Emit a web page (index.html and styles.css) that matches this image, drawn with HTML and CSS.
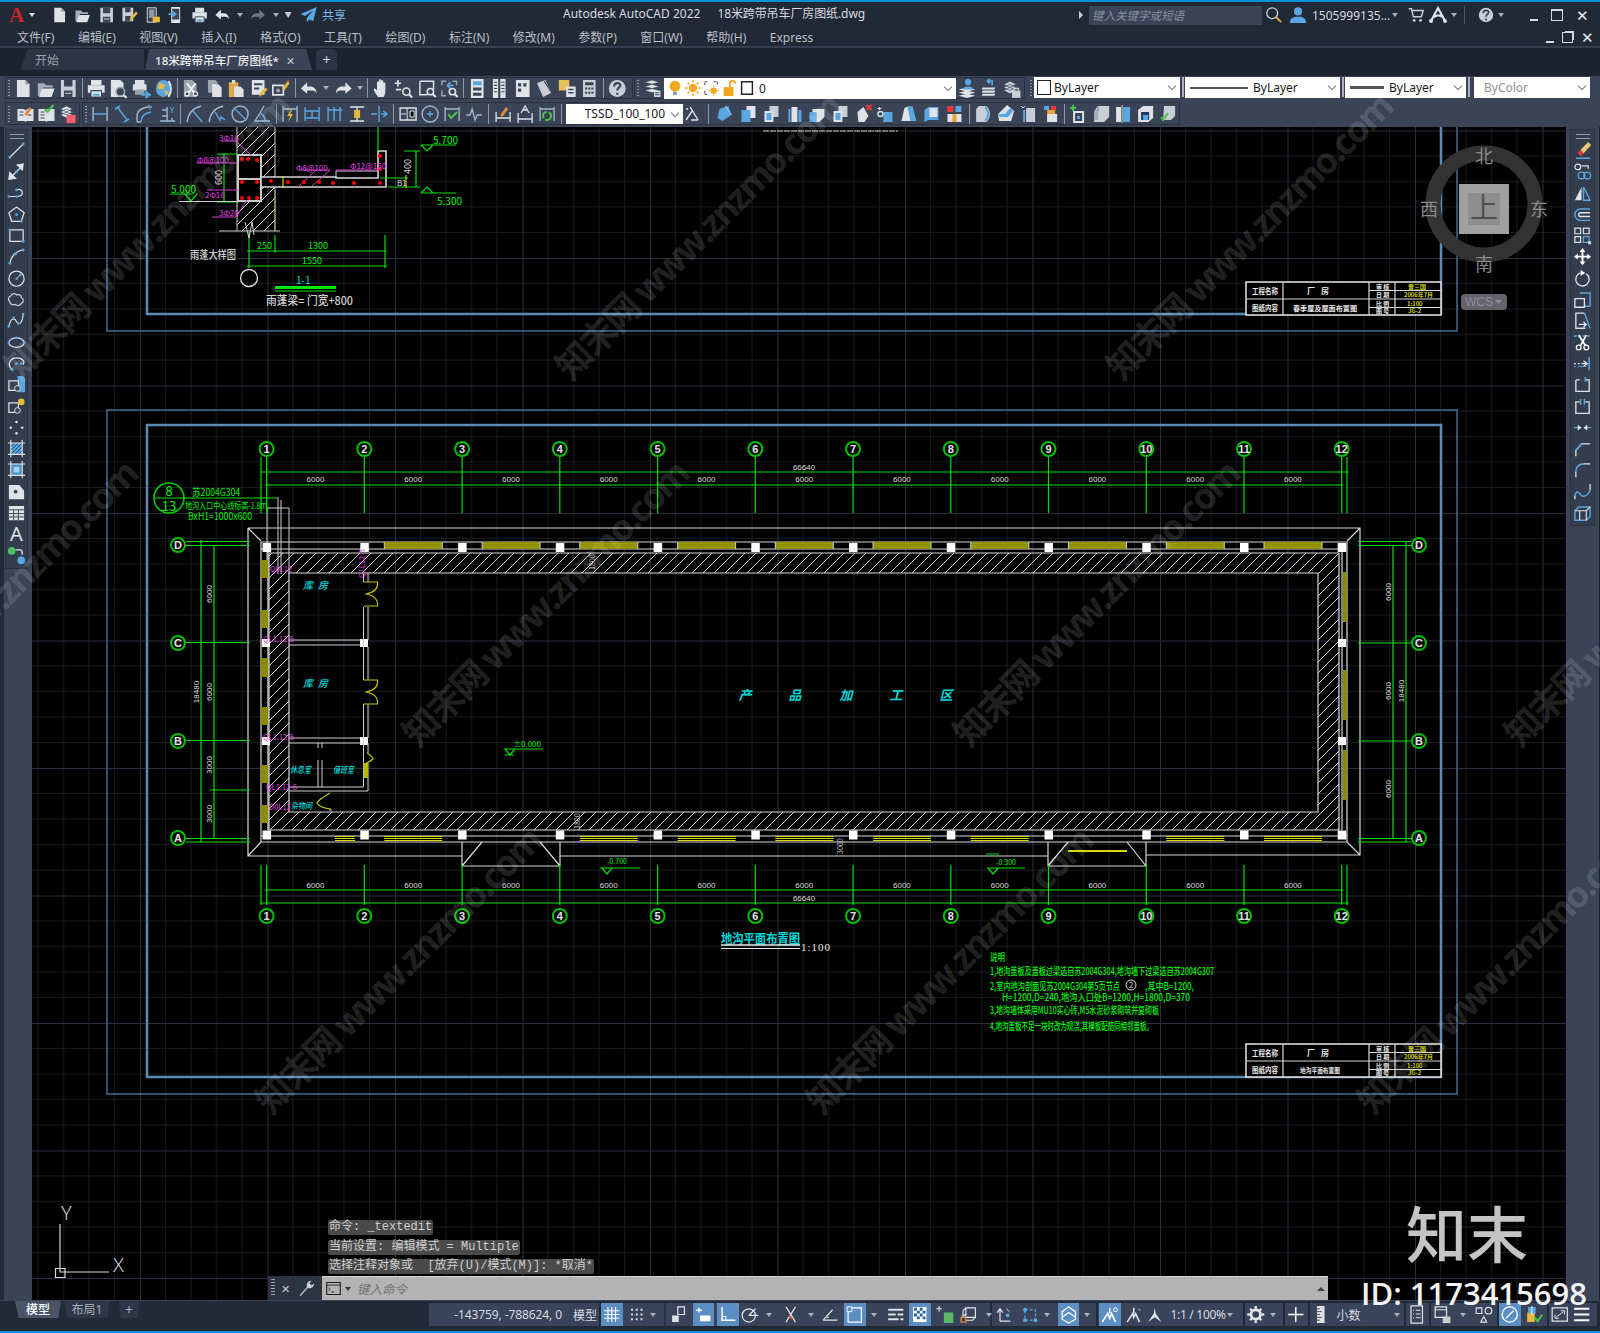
FILE: index.html
```html
<!DOCTYPE html>
<html lang="zh">
<head>
<meta charset="utf-8">
<title>Autodesk AutoCAD 2022</title>
<link rel="stylesheet" href="styles.css">
</head>
<body>
<svg class="sprite" xmlns="http://www.w3.org/2000/svg">
<symbol id="new" viewBox="0 0 20 20"><path d="M4 2h8l4 4v12H4z" fill="#dfe3e8"/><path d="M12 2v4h4z" fill="#8f98a5"/></symbol>
<symbol id="open" viewBox="0 0 20 20"><path d="M2 5h6l2 2h6v2H7l-3 8H2z" fill="#a6adb8"/><path d="M6 10h12l-3 8H3z" fill="#dfe3e8"/></symbol>
<symbol id="save" viewBox="0 0 20 20"><path d="M3 2h14v16H3z" fill="#c9ced6"/><path d="M6 2h8v6H6zM6 12h8v6H6z" fill="#3a4456"/><path d="M7 14h6v1H7z" fill="#c9ced6"/></symbol>
<symbol id="saveas" viewBox="0 0 20 20"><path d="M2 2h12v15H2z" fill="#c9ced6"/><path d="M5 2h6v5H5zM5 11h6v6H5z" fill="#3a4456"/><path d="M10 17l1-4 6-7 2 2-6 7z" fill="#e8b93a"/></symbol>
<symbol id="phone" viewBox="0 0 20 20"><path d="M4 2h10v16H4z" fill="#39404c" stroke="#dfe3e8"/><path d="M6 4h6v9H6z" fill="#8f98a5"/><path d="M10 12h8v6h-8z" fill="#e8b93a"/></symbol>
<symbol id="phone2" viewBox="0 0 20 20"><path d="M5 1h10v18H5z" fill="#dfe3e8"/><path d="M6 3h8v12H6z" fill="#3a4456"/><path d="M2 9h7M6 6l4 3-4 3" stroke="#5aa6e0" stroke-width="2" fill="none"/></symbol>
<symbol id="print" viewBox="0 0 20 20"><path d="M5 2h10v5H5z" fill="#dfe3e8"/><path d="M2 7h16v7H2z" fill="#dfe3e8"/><path d="M5 12h10v6H5z" fill="#dfe3e8" stroke="#3a4456"/><path d="M7 15h6v2H7z" fill="#5aa6e0"/></symbol>
<symbol id="preview" viewBox="0 0 20 20"><path d="M3 2h9l3 3v13H3z" fill="#dfe3e8"/><circle cx="12" cy="13" r="4" fill="#3a4456" stroke="#9aa3ae" stroke-width="1.5"/><path d="M15 16l3 3" stroke="#dfe3e8" stroke-width="2"/></symbol>
<symbol id="publish" viewBox="0 0 20 20"><path d="M4 2h9v4H4zM2 6h13v6H2z" fill="#dfe3e8"/><path d="M4 11h9v5H4z" fill="#9aa3ae"/><path d="M10 16h7M14 13l4 3-4 3" stroke="#5aa6e0" stroke-width="2" fill="none"/></symbol>
<symbol id="globe" viewBox="0 0 20 20"><ellipse cx="10" cy="10" rx="7" ry="8" fill="#5aa6e0"/><path d="M6 4l6 3-2 4-5-1zM11 12l4 1-2 4z" fill="#e8b93a"/><path d="M15 3c3 4 3 10 0 15" stroke="#dfe3e8" stroke-width="2" fill="none"/></symbol>
<symbol id="cut" viewBox="0 0 20 20"><path d="M3 2h8l4 4v12H3z" fill="#9aa3ae"/><path d="M6 5l8 11M14 5L6 16" stroke="#fff" stroke-width="1.6"/><circle cx="6" cy="15" r="2" fill="#3a4456" stroke="#fff"/><circle cx="14" cy="15" r="2" fill="#3a4456" stroke="#fff"/></symbol>
<symbol id="copy" viewBox="0 0 20 20"><path d="M4 2h7l2 2v10H4z" fill="#9aa3ae"/><path d="M8 6h6l3 3v9H8z" fill="#dfe3e8"/></symbol>
<symbol id="paste" viewBox="0 0 20 20"><path d="M3 4h9v14H3z" fill="#e0a94a"/><path d="M6 2h3v3H6z" fill="#dfe3e8"/><path d="M8 8h6l3 3v7H8z" fill="#dfe3e8"/></symbol>
<symbol id="match" viewBox="0 0 20 20"><path d="M3 2h12v14H3z" fill="#dfe3e8"/><path d="M5 5h8v2H5zM5 9h5v2H5z" fill="#3a4456"/><path d="M10 18l1-4 5-5 2 2-5 5z" fill="#e8b93a"/></symbol>
<symbol id="brush" viewBox="0 0 20 20"><path d="M2 7h10v9H2z" fill="none" stroke="#dfe3e8" stroke-width="1.6"/><circle cx="7" cy="12" r="2" fill="#9aa3ae"/><path d="M11 10l5-7 2 2-5 7z" fill="#e8b93a"/><path d="M15 3l2-1 1 2z" fill="#e24b3e"/></symbol>
<symbol id="undo" viewBox="0 0 20 20"><path d="M8 4L2 10l6 5v-3h5c2 0 3 1 4 3 0-5-3-7-6-7H8z" fill="#dfe3e8"/></symbol>
<symbol id="redo" viewBox="0 0 20 20"><path d="M12 4l6 6-6 5v-3H7c-2 0-3 1-4 3 0-5 3-7 6-7h3z" fill="#dfe3e8"/></symbol>
<symbol id="redodim" viewBox="0 0 20 20"><path d="M12 4l6 6-6 5v-3H7c-2 0-3 1-4 3 0-5 3-7 6-7h3z" fill="#6f7785"/></symbol>
<symbol id="hand" viewBox="0 0 20 20"><path d="M6 18c-2-3-4-5-4-7s2-1 3 1V4c0-1 2-1 2 0v5V2c0-1 2-1 2 0v7V3c0-1 2-1 2 0v6V5c0-1 2-1 2 0v8c0 2-1 4-2 5z" fill="#dfe3e8"/></symbol>
<symbol id="zrt" viewBox="0 0 20 20"><path d="M4 2v6M1 5h6M2 11h5" stroke="#dfe3e8" stroke-width="1.6"/><circle cx="12" cy="13" r="3.4" fill="none" stroke="#dfe3e8" stroke-width="1.5"/><path d="M14.5 15.5l3 3" stroke="#dfe3e8" stroke-width="2"/></symbol>
<symbol id="zwin" viewBox="0 0 20 20"><path d="M3 3h13v8M3 3v13h7" fill="none" stroke="#dfe3e8" stroke-width="1.4"/><circle cx="13" cy="13" r="3" fill="none" stroke="#dfe3e8" stroke-width="1.5"/><path d="M15 15l3 3" stroke="#dfe3e8" stroke-width="2"/></symbol>
<symbol id="zprev" viewBox="0 0 20 20"><path d="M3 7V3h4M17 7V3h-4M3 12v5h4" fill="none" stroke="#9aa3ae" stroke-width="1.4"/><path d="M8 7H14M8 7l3-3M8 7l3 3" stroke="#5aa6e0" stroke-width="1.6" fill="none"/><circle cx="13" cy="13" r="3" fill="none" stroke="#dfe3e8" stroke-width="1.5"/><path d="M15 15l3 3" stroke="#dfe3e8" stroke-width="2"/></symbol>
<symbol id="props" viewBox="0 0 20 20"><path d="M4 1h12v18H4z" fill="#dfe3e8"/><path d="M6 3h8v4H6z" fill="#5aa6e0"/><path d="M6 9h8v3H6zM6 14h8v3H6z" fill="#3a4456"/></symbol>
<symbol id="dc" viewBox="0 0 20 20"><path d="M4 1h5v18H4zM11 1h5v18h-5z" fill="#dfe3e8"/><path d="M5 4h3M5 7h3M5 10h3M5 13h3M12 4h3M12 7h3M12 10h3M12 13h3" stroke="#3a4456"/></symbol>
<symbol id="tpal" viewBox="0 0 20 20"><path d="M4 2h13v16H4z" fill="#dfe3e8"/><path d="M6 5h3v3H6zM11 5h3v3h-3zM6 10h3v3H6z" fill="#3a4456"/></symbol>
<symbol id="sheet" viewBox="0 0 20 20"><path d="M3 5l8-3 6 12-8 4z" fill="#c9ced6"/><path d="M10 3l7 11" stroke="#3a4456"/></symbol>
<symbol id="markup" viewBox="0 0 20 20"><path d="M2 2h10v10H2z" fill="#e8c15a"/><path d="M9 8h9v10H9z" fill="#dfe3e8"/><path d="M11 11h5M11 14h5" stroke="#3a4456" stroke-width="1.4"/></symbol>
<symbol id="calc" viewBox="0 0 20 20"><path d="M4 2h12v16H4z" fill="#c9ced6"/><path d="M6 4h8v3H6z" fill="#3a4456"/><path d="M6 9h2v2H6zM9 9h2v2H9zM12 9h2v2h-2zM6 13h2v2H6zM9 13h2v2H9zM12 13h2v2h-2z" fill="#3a4456"/></symbol>
<symbol id="help" viewBox="0 0 20 20"><circle cx="10" cy="10" r="8" fill="#c9ced6"/><path d="M7 8c0-4 6-4 6-1 0 2-3 2-3 5M10 14v2" stroke="#3a4456" stroke-width="2" fill="none"/></symbol>
<symbol id="layer" viewBox="0 0 20 20"><path d="M3 4l7-2 7 2-7 2zM3 8l7-2 7 2-7 2zM3 12l7-2 7 2-7 2z" fill="#dfe3e8" stroke="#3a4456" stroke-width=".6"/><path d="M12 12h6v6h-6z" fill="#dfe3e8"/><path d="M13 14h4M13 16h4" stroke="#3a4456"/></symbol>
<symbol id="lay1" viewBox="0 0 20 20"><path d="M2 11l8-2 8 2-8 2zM2 14l8-2 8 2-8 2zM2 17l8-2 8 2-8 2z" fill="#dfe3e8"/><circle cx="11" cy="4" r="3" fill="#5aa6e0"/><path d="M6 11c0-4 10-4 10 0z" fill="#5aa6e0"/></symbol>
<symbol id="lay2" viewBox="0 0 20 20"><path d="M4 9h12l-1 2H3zM4 12h12l-1 2H3zM4 15h12l-1 2H3z" fill="#dfe3e8"/><path d="M13 7V3H8M8 3l3-2M8 3l3 2" stroke="#5aa6e0" stroke-width="1.6" fill="none"/></symbol>
<symbol id="lay3" viewBox="0 0 20 20"><path d="M3 6l6-3 6 3-6 3zM3 9l6-3 6 3-6 3zM3 12l6-3 6 3-6 3z" fill="#c9ced6" stroke="#3a4456" stroke-width=".6"/><path d="M11 12h8v7h-8z" fill="#c9ced6"/><path d="M13 12V10h4v2" stroke="#c9ced6" fill="none" stroke-width="1.4"/></symbol>
<symbol id="bulb" viewBox="0 0 20 20"><circle cx="10" cy="8" r="6" fill="#f2a71e"/><path d="M8 14h4v4H8z" fill="#8f98a5"/></symbol>
<symbol id="sun" viewBox="0 0 20 20"><circle cx="10" cy="10" r="4.5" fill="#f2a71e"/><path d="M10 1v3M10 16v3M1 10h3M16 10h3M4 4l2 2M14 14l2 2M4 16l2-2M14 6l2-2" stroke="#f2a71e" stroke-width="1.6"/></symbol>
<symbol id="frz" viewBox="0 0 20 20"><path d="M3 7V3h4M13 3h4v4M3 13v4h4" fill="none" stroke="#6c7480" stroke-width="1.4" stroke-dasharray="3 1"/><circle cx="13" cy="13" r="3.5" fill="#f2a71e"/><path d="M13 7v2M13 17v2M7 13h2M17 13h2" stroke="#f2a71e"/></symbol>
<symbol id="lock" viewBox="0 0 20 20"><path d="M4 9h11v10H4z" fill="#f2a71e"/><path d="M11 9V5c0-4 6-4 6 0" fill="none" stroke="#f2a71e" stroke-width="2"/></symbol>
<symbol id="sq" viewBox="0 0 20 20"><path d="M4 3h12v14H4z" fill="#fff" stroke="#222" stroke-width="1.6"/></symbol>
<symbol id="note" viewBox="0 0 20 20"><path d="M2 5h6c1 0 2 1 2 2 0-1 1-2 2-2h6v12h-7l-1 1-1-1H2z" fill="#dfe3e8"/><path d="M4 8h4M4 11h4M12 11h4" stroke="#3a4456"/><path d="M9 10l5-7 2 2-5 7z" fill="#e8863a"/></symbol>
<symbol id="ncheck" viewBox="0 0 20 20"><path d="M2 5h7l1 1 1-1h7v12h-7l-1 1-1-1H2z" fill="#dfe3e8"/><path d="M4 8h4M4 11h4M4 14h4" stroke="#3a4456"/><path d="M8 5l3 3 6-7" stroke="#4ec24e" stroke-width="2" fill="none"/></symbol>
<symbol id="npink" viewBox="0 0 20 20"><path d="M3 5l6-3 6 3-6 3zM3 8l6-3 6 3-6 3zM3 11l6-3 6 3-6 3z" fill="#dfe3e8" stroke="#3a4456" stroke-width=".6"/><path d="M9 11h9v8H9z" fill="#f0606a"/></symbol>
<symbol id="dlin" viewBox="0 0 20 20"><path d="M3 3v14M17 3v14" stroke="#9db6cf" stroke-width="1.5"/><path d="M3 10h14" stroke="#5aa6e0" stroke-width="1.5"/></symbol>
<symbol id="dali" viewBox="0 0 20 20"><path d="M3 5l5-3M12 18l5-3M6 4l9 12" stroke="#5aa6e0" stroke-width="1.5" fill="none"/></symbol>
<symbol id="darc" viewBox="0 0 20 20"><path d="M3 18V12C3 6 9 3 16 3M3 18h4" stroke="#9db6cf" stroke-width="1.5" fill="none"/><path d="M7 18c0-6 4-9 10-10" stroke="#5aa6e0" stroke-width="1.5" fill="none"/><path d="M14 1l4 2-3 3" fill="none" stroke="#5aa6e0"/></symbol>
<symbol id="dord" viewBox="0 0 20 20"><path d="M3 17h15M10 3v14M5 6h5M5 12h5M15 14v3" stroke="#9db6cf" stroke-width="1.4"/><path d="M13 3l2 3 2-3M15 6v3" stroke="#5aa6e0" fill="none"/></symbol>
<symbol id="drad" viewBox="0 0 20 20"><path d="M2 18C3 10 8 4 16 2" stroke="#9db6cf" stroke-width="1.4" fill="none"/><path d="M17 18L8 7" stroke="#5aa6e0" stroke-width="1.4"/></symbol>
<symbol id="djog" viewBox="0 0 20 20"><path d="M2 18C3 10 8 4 16 2" stroke="#9db6cf" stroke-width="1.4" fill="none"/><path d="M18 16l-4-3-1 3-5-8" stroke="#5aa6e0" stroke-width="1.4" fill="none"/></symbol>
<symbol id="ddia" viewBox="0 0 20 20"><circle cx="10" cy="10" r="8" stroke="#9db6cf" stroke-width="1.4" fill="none"/><path d="M4 4l12 12" stroke="#5aa6e0" stroke-width="1.4"/></symbol>
<symbol id="dang" viewBox="0 0 20 20"><path d="M2 17h16M3 17L12 2" stroke="#9db6cf" stroke-width="1.4"/><path d="M13 17c0-4-2-6-4-8" stroke="#5aa6e0" stroke-width="1.4" fill="none"/></symbol>
<symbol id="dqk" viewBox="0 0 20 20"><path d="M3 2v16M17 2v16M3 5h14" stroke="#9db6cf" stroke-width="1.4"/><path d="M11 6l-4 6h3l-2 6 5-8h-3l2-4z" fill="#e8b93a"/></symbol>
<symbol id="dbase" viewBox="0 0 20 20"><path d="M3 3v14M17 3v14M3 7h14M3 14h14M10 7v7" stroke="#5aa6e0" stroke-width="1.4"/></symbol>
<symbol id="dcont" viewBox="0 0 20 20"><path d="M3 3v14M9 3v14M15 3v14M3 6h14" stroke="#5aa6e0" stroke-width="1.4"/></symbol>
<symbol id="dspc" viewBox="0 0 20 20"><path d="M3 3h14M3 17h14M10 3v14" stroke="#dfe3e8" stroke-width="1.4"/><path d="M7 6h6v8H7z" fill="#e8b93a"/></symbol>
<symbol id="dbrk" viewBox="0 0 20 20"><path d="M10 2v16M2 10h6M12 10h6M14 7l4 3-4 3" stroke="#5aa6e0" stroke-width="1.4" fill="none"/></symbol>
<symbol id="tol" viewBox="0 0 20 20"><path d="M2 4h16v12H2z" fill="none" stroke="#dfe3e8" stroke-width="1.4"/><path d="M9 4v12M3 10h5M12 7h4v6h-4z" stroke="#dfe3e8"/></symbol>
<symbol id="cen" viewBox="0 0 20 20"><circle cx="10" cy="10" r="8" fill="none" stroke="#9db6cf" stroke-width="1.4"/><path d="M10 7v6M7 10h6" stroke="#5aa6e0" stroke-width="1.4"/></symbol>
<symbol id="insp" viewBox="0 0 20 20"><path d="M3 3v14M17 3v14M3 5h14" stroke="#9db6cf" stroke-width="1.4"/><path d="M6 10l3 4 6-6" stroke="#4ec24e" stroke-width="2" fill="none"/></symbol>
<symbol id="jogl" viewBox="0 0 20 20"><path d="M2 11h4l2-6 3 11 2-5h5" stroke="#9db6cf" stroke-width="1.4" fill="none"/></symbol>
<symbol id="dedit" viewBox="0 0 20 20"><path d="M3 8v10M17 8v10M3 14h14" stroke="#dfe3e8" stroke-width="1.3"/><path d="M7 11l6-8 2 2-6 8z" fill="#e8863a"/></symbol>
<symbol id="dtxt" viewBox="0 0 20 20"><path d="M3 9v10M17 9v10M3 15h14M6 9l4-7 4 7M7.500 6h5" stroke="#dfe3e8" stroke-width="1.3" fill="none"/></symbol>
<symbol id="dupd" viewBox="0 0 20 20"><path d="M3 3v14M17 3v14M3 5h14" stroke="#9db6cf" stroke-width="1.3"/><circle cx="10" cy="12" r="4" fill="none" stroke="#4ec24e" stroke-width="2" stroke-dasharray="8 2"/></symbol>
<symbol id="ann" viewBox="0 0 20 20"><path d="M2 16l6-9M2 5h2M6 3l8 13M7 16h7" stroke="#dfe3e8" stroke-width="1.4"/></symbol>
<symbol id="s3a" viewBox="0 0 20 20"><path d="M4 5l9-3 3 9-9 6-5-3z" fill="#5aa6e0"/><path d="M10 2l6 9" stroke="#9fd0f2"/></symbol>
<symbol id="s3b" viewBox="0 0 20 20"><path d="M8 2h9v12H8z" fill="#dfe3e8"/><path d="M3 6h9v12H3z" fill="#5aa6e0"/></symbol>
<symbol id="s3c" viewBox="0 0 20 20"><path d="M8 2h9v11H8z" fill="#c9ced6"/><path d="M3 7h9v11H3z" fill="#dfe3e8"/><path d="M5 9h5v7H5z" fill="#5aa6e0"/></symbol>
<symbol id="s3d" viewBox="0 0 20 20"><path d="M4 5h2v13H4zM14 6h3v12h-3z" fill="#5aa6e0"/><path d="M7 3h6v15H7z" fill="#dfe3e8"/></symbol>
<symbol id="s3e" viewBox="0 0 20 20"><path d="M2 8h7v10H2z" fill="#5aa6e0"/><path d="M5 5h12v8l-5 5H9V8H5z" fill="#dfe3e8"/></symbol>
<symbol id="s3f" viewBox="0 0 20 20"><path d="M4 8l6-5 5 9-4 6H5z" fill="#dfe3e8"/><path d="M13 1l5 5M18 1l-5 5" stroke="#f0383a" stroke-width="2"/></symbol>
<symbol id="s3g" viewBox="0 0 20 20"><path d="M8 8h9v10H8z" fill="#5aa6e0"/><path d="M4 3v3M2 4.500h4" stroke="#dfe3e8"/><circle cx="5" cy="10" r="2.500" fill="none" stroke="#dfe3e8" stroke-width="1.4"/></symbol>
<symbol id="s3h" viewBox="0 0 20 20"><path d="M3 17l3-13 5-2 2 15z" fill="#dfe3e8"/><path d="M9 3l5-1 4 15h-6z" fill="#5aa6e0"/></symbol>
<symbol id="s3i" viewBox="0 0 20 20"><path d="M3 6l4-3v13l-4 2zM7 3h10v13H7z" fill="#5aa6e0"/><path d="M8 4h8v9H8z" fill="#dfe3e8"/></symbol>
<symbol id="s3j" viewBox="0 0 20 20"><path d="M3 2h6v6H3z" fill="#f0383a"/><path d="M11 2h6v6h-6z" fill="#5aa6e0"/><path d="M3 10h14v8H3z" fill="#dfe3e8"/><path d="M8 10h4v8H8z" fill="#e8a33a"/></symbol>
<symbol id="s3k" viewBox="0 0 20 20"><path d="M6 2h7c5 3 5 13 0 16H3V5z" fill="#c9ced6"/><path d="M12 3c4 4 4 10 0 14" stroke="#5aa6e0" stroke-width="2" fill="none"/></symbol>
<symbol id="s3l" viewBox="0 0 20 20"><path d="M11 1l7 6-3 10H3l-1-7z" fill="#dfe3e8"/><path d="M2 10h7l5-6 3 3-5 6H4z" fill="#5aa6e0"/></symbol>
<symbol id="s3m" viewBox="0 0 20 20"><path d="M5 6h2v12H5z" fill="#5aa6e0"/><path d="M8 4h9v14H8z" fill="#c9ced6"/><path d="M3 2l2 2 2-2" stroke="#dfe3e8" fill="none"/></symbol>
<symbol id="s3n" viewBox="0 0 20 20"><path d="M7 6h8v4H7z" fill="#e8a33a"/><path d="M4 2h5v4H4z" fill="#5aa6e0"/><path d="M11 2h5v4h-5z" fill="#f0383a"/><path d="M7 10h10v8H7z" fill="#dfe3e8"/></symbol>
<symbol id="s3o" viewBox="0 0 20 20"><path d="M5 7h11v12H5z" fill="#dfe3e8"/><path d="M7 9h7v8H7z" fill="#3a4456"/><path d="M9 12h3v3H9z" fill="#5aa6e0"/><path d="M2 4h6M5 1v6" stroke="#4ec24e" stroke-width="2"/></symbol>
<symbol id="s3p" viewBox="0 0 20 20"><path d="M7 2h11v11l-5 5H3V7z" fill="#c9ced6"/><path d="M7 2v5H3" stroke="#7a8290" fill="none"/><path d="M3 7h4v9H3z" fill="#a6adb8"/></symbol>
<symbol id="s3q" viewBox="0 0 20 20"><path d="M3 3h5v15H3z" fill="#dfe3e8"/><path d="M10 3h7v15h-7z" fill="#5aa6e0"/><path d="M9 1v18" stroke="#c9ced6"/></symbol>
<symbol id="s3r" viewBox="0 0 20 20"><path d="M3 6l5-4h10v12l-5 4H3z" fill="#dfe3e8"/><path d="M6 8h8v8H6z" fill="#1f3a58"/><path d="M8 11h5v5H8z" fill="#5aa6e0"/></symbol>
<symbol id="s3s" viewBox="0 0 20 20"><path d="M7 2h11v10l-4 4H6z" fill="#c9ced6"/><path d="M4 13l2 3 5-7" stroke="#4ec24e" stroke-width="2" fill="none"/></symbol>
<symbol id="a-line" viewBox="0 0 20 20"><path d="M3 17L17 3" stroke="#dfe3e8" stroke-width="1.3"/><circle cx="3" cy="17" r="1.500" fill="#5aa6e0"/><circle cx="17" cy="3" r="1.500" fill="#5aa6e0"/></symbol>
<symbol id="a-xl" viewBox="0 0 20 20"><path d="M4 16L16 4M10 3l7-1-1 7M3 11l-1 7 7-1z" stroke="#dfe3e8" stroke-width="1.3" fill="#dfe3e8"/><circle cx="10" cy="10" r="1.500" fill="#5aa6e0"/></symbol>
<symbol id="a-pl" viewBox="0 0 20 20"><path d="M2 13h8c4 0 7-2 6-5s-4-3-6-2" stroke="#dfe3e8" stroke-width="1.3" fill="none"/><circle cx="2" cy="13" r="1.400" fill="#5aa6e0"/><circle cx="10" cy="13" r="1.400" fill="#5aa6e0"/><circle cx="10" cy="6" r="1.400" fill="#5aa6e0"/></symbol>
<symbol id="a-pg" viewBox="0 0 20 20"><path d="M10 2l8 6-3 9H5L2 8z" stroke="#dfe3e8" stroke-width="1.3" fill="none"/><circle cx="10" cy="10" r="1.500" fill="#5aa6e0"/><circle cx="15" cy="17" r="1.500" fill="#5aa6e0"/></symbol>
<symbol id="a-rec" viewBox="0 0 20 20"><path d="M3 4h14v12H3z" stroke="#dfe3e8" stroke-width="1.3" fill="none"/><circle cx="3" cy="4" r="1.500" fill="#5aa6e0"/><circle cx="17" cy="16" r="1.500" fill="#5aa6e0"/></symbol>
<symbol id="a-arc" viewBox="0 0 20 20"><path d="M3 17C4 10 9 4 17 3" stroke="#dfe3e8" stroke-width="1.3" fill="none"/><circle cx="3" cy="17" r="1.500" fill="#5aa6e0"/><circle cx="9" cy="7" r="1.500" fill="#5aa6e0"/><circle cx="17" cy="3" r="1.500" fill="#5aa6e0"/></symbol>
<symbol id="a-cir" viewBox="0 0 20 20"><circle cx="10" cy="10" r="8" stroke="#dfe3e8" stroke-width="1.3" fill="none"/><path d="M10 10l5-5" stroke="#dfe3e8"/><circle cx="10" cy="10" r="1.300" fill="#5aa6e0"/><circle cx="14" cy="6" r="1.500" fill="#5aa6e0"/></symbol>
<symbol id="a-cl" viewBox="0 0 20 20"><path d="M4 6c1-3 5-3 6-1 3-1 6 1 5 3 3 1 3 5 0 6-1 2-4 3-6 1-3 1-6 0-6-3-2-1-2-5 1-6z" stroke="#c9ced6" stroke-width="1.300" fill="none"/></symbol>
<symbol id="a-sp" viewBox="0 0 20 20"><path d="M2 16C4 6 8 7 10 11s6 3 7-8" stroke="#dfe3e8" stroke-width="1.3" fill="none"/><circle cx="2" cy="16" r="1.400" fill="#5aa6e0"/><circle cx="7" cy="7" r="1.400" fill="#5aa6e0"/><circle cx="12" cy="13" r="1.400" fill="#5aa6e0"/><circle cx="17" cy="3" r="1.400" fill="#5aa6e0"/></symbol>
<symbol id="a-el" viewBox="0 0 20 20"><ellipse cx="10" cy="10" rx="8" ry="5" stroke="#dfe3e8" stroke-width="1.3" fill="none"/><circle cx="10" cy="5" r="1.400" fill="#5aa6e0"/><circle cx="2" cy="10" r="1.400" fill="#5aa6e0"/><circle cx="18" cy="10" r="1.400" fill="#5aa6e0"/></symbol>
<symbol id="a-ea" viewBox="0 0 20 20"><path d="M5 16C0 11 3 4 10 4s9 4 7 7" stroke="#dfe3e8" stroke-width="1.3" fill="none"/><circle cx="5" cy="16" r="1.400" fill="#5aa6e0"/><circle cx="10" cy="10" r="1.400" fill="#5aa6e0"/><circle cx="15" cy="10" r="1.400" fill="#5aa6e0"/></symbol>
<symbol id="a-ins" viewBox="0 0 20 20"><path d="M11 1h6l2 3v14h-8z" fill="#5aa6e0"/><path d="M2 6h10v10H2z" fill="#3a4456" stroke="#dfe3e8" stroke-width="1.300"/><circle cx="11" cy="14" r="3" fill="#3a4456" stroke="#dfe3e8"/></symbol>
<symbol id="a-blk" viewBox="0 0 20 20"><path d="M2 6h10v10H2z" fill="none" stroke="#dfe3e8" stroke-width="1.300"/><circle cx="11" cy="14" r="3" fill="#3a4456" stroke="#dfe3e8"/><circle cx="15" cy="5" r="3.500" fill="#e8b93a"/></symbol>
<symbol id="a-pt" viewBox="0 0 20 20"><circle cx="4" cy="10" r="1.300" fill="#dfe3e8"/><circle cx="10" cy="4" r="1.300" fill="#dfe3e8"/><circle cx="16" cy="10" r="1.300" fill="#dfe3e8"/><circle cx="10" cy="16" r="1.300" fill="#dfe3e8"/></symbol>
<symbol id="a-ha" viewBox="0 0 20 20"><path d="M4 4h12v12H4z" fill="#5aa6e0"/><path d="M4 8l4-4M4 12l8-8M4 16L16 4M8 16l8-8M12 16l4-4" stroke="#1f3a58"/><path d="M4 1v18M16 1v18M1 4h18M1 16h18" stroke="#dfe3e8" stroke-width="1.2"/></symbol>
<symbol id="a-gr" viewBox="0 0 20 20"><path d="M4 4h12v12H4z" fill="#4d8ec2"/><path d="M7 7h6v6H7z" fill="#a6d3f2"/><path d="M4 1v18M16 1v18M1 4h18M1 16h18" stroke="#dfe3e8" stroke-width="1.2"/></symbol>
<symbol id="a-reg" viewBox="0 0 20 20"><path d="M2 3h11l5 6v9H2z" fill="#dfe3e8"/><circle cx="9" cy="10" r="2" fill="#3a4456"/></symbol>
<symbol id="a-tb" viewBox="0 0 20 20"><path d="M2 3h16v15H2z" fill="#dfe3e8"/><path d="M2 7h16M2 11h16M2 14.500h16M7 7v11M12 7v11" stroke="#3a4456"/></symbol>
<symbol id="a-mt" viewBox="0 0 20 20"><circle cx="5" cy="5" r="4" fill="#4ec26a"/><path d="M9 4h5c1 0 2 1 2 3v2" stroke="#dfe3e8" stroke-width="1.4" fill="none"/><circle cx="15" cy="15" r="4" fill="#5aa6e0"/></symbol>
<symbol id="b-er" viewBox="0 0 20 20"><path d="M8 9L16 1l3 3-8 9z" fill="#f1c878"/><path d="M5 12l3-3 3 4-3 3z" fill="#f0383a"/><path d="M3 18h15" stroke="#5aa6e0" stroke-width="1.4"/></symbol>
<symbol id="b-cp" viewBox="0 0 20 20"><circle cx="5" cy="5" r="3" fill="none" stroke="#dfe3e8" stroke-width="1.300"/><path d="M9 4h7v3" stroke="#dfe3e8" stroke-width="1.300" fill="none"/><circle cx="9" cy="14" r="3.500" fill="none" stroke="#5aa6e0" stroke-width="1.400"/><circle cx="15" cy="14" r="3.500" fill="none" stroke="#5aa6e0" stroke-width="1.400"/></symbol>
<symbol id="b-mi" viewBox="0 0 20 20"><path d="M9 3v14H2z" fill="#dfe3e8"/><path d="M11 3v14h7z" fill="none" stroke="#5aa6e0" stroke-width="1.500"/></symbol>
<symbol id="b-of" viewBox="0 0 20 20"><path d="M18 4H8a6 6 0 000 12h10" stroke="#5aa6e0" stroke-width="1.500" fill="none"/><path d="M18 8H8a2 2 0 000 4h10" stroke="#dfe3e8" stroke-width="1.500" fill="none"/></symbol>
<symbol id="b-ar" viewBox="0 0 20 20"><path d="M2 2h6v6H2zM11 2h6v6h-6zM2 11h6v6H2z" fill="none" stroke="#dfe3e8" stroke-width="1.300"/><path d="M11 11h6v6h-6z" fill="none" stroke="#5aa6e0" stroke-width="1.300"/><path d="M16 16h3v3h-3z" fill="#dfe3e8"/></symbol>
<symbol id="b-mv" viewBox="0 0 20 20"><path d="M10 1l3 4h-2v4h4V7l4 3-4 3v-2h-4v4h2l-3 4-3-4h2v-4H5v2l-4-3 4-3v2h4V5H7z" fill="#fff"/></symbol>
<symbol id="b-ro" viewBox="0 0 20 20"><path d="M8 4a7 7 0 106 1" stroke="#dfe3e8" stroke-width="1.400" fill="none"/><path d="M8 1l5 3-5 3z" fill="#fff"/></symbol>
<symbol id="b-sc" viewBox="0 0 20 20"><path d="M7 3h11v14H12" stroke="#5aa6e0" stroke-width="1.500" fill="none"/><path d="M2 9h10v9H2z" fill="none" stroke="#dfe3e8" stroke-width="1.400"/></symbol>
<symbol id="b-st" viewBox="0 0 20 20"><path d="M12 2H3v16h10" stroke="#dfe3e8" stroke-width="1.400" fill="none"/><path d="M12 2l6 16" stroke="#5aa6e0" stroke-width="1.500"/><path d="M6 14h8M11 11l3 3-3 3" stroke="#dfe3e8" stroke-width="1.400" fill="none"/></symbol>
<symbol id="b-tr" viewBox="0 0 20 20"><path d="M1 3h18" stroke="#5aa6e0" stroke-dasharray="3 1.500" stroke-width="1.400"/><path d="M6 2l7 11M14 2L8 13" stroke="#fff" stroke-width="1.800"/><circle cx="6" cy="15" r="2.500" fill="none" stroke="#fff" stroke-width="1.300"/><circle cx="14" cy="15" r="2.500" fill="none" stroke="#fff" stroke-width="1.300"/></symbol>
<symbol id="b-ex" viewBox="0 0 20 20"><path d="M17 3v14" stroke="#5aa6e0" stroke-width="1.600"/><path d="M1 10h2M5 10h2M9 10h5M11 7l4 3-4 3" stroke="#dfe3e8" stroke-width="1.300" fill="none"/><path d="M1 13h2M5 13h9" stroke="#5aa6e0"/></symbol>
<symbol id="b-bk" viewBox="0 0 20 20"><path d="M3 5v12h14V5h-4" stroke="#dfe3e8" stroke-width="1.400" fill="none"/><path d="M3 5h4" stroke="#dfe3e8" stroke-width="1.400"/><path d="M13 2v5" stroke="#5aa6e0" stroke-width="1.600"/></symbol>
<symbol id="b-bp" viewBox="0 0 20 20"><path d="M7 5H3v12h14V5h-4" stroke="#dfe3e8" stroke-width="1.400" fill="none"/><path d="M8 2v6M12 2v6" stroke="#5aa6e0" stroke-width="1.600"/></symbol>
<symbol id="b-jn" viewBox="0 0 20 20"><path d="M1 10h7M19 10h-7" stroke="#5aa6e0" stroke-width="1.400"/><path d="M5 7l4 3-4 3zM15 7l-4 3 4 3z" fill="#dfe3e8"/></symbol>
<symbol id="b-ch" viewBox="0 0 20 20"><path d="M3 18v-6l6-7h9" stroke="#dfe3e8" stroke-width="1.400" fill="none"/><path d="M3 12l6-7" stroke="#5aa6e0" stroke-width="1.800"/></symbol>
<symbol id="b-fi" viewBox="0 0 20 20"><path d="M3 18V12" stroke="#dfe3e8" stroke-width="1.400"/><path d="M3 12C3 7 7 4 11 4" stroke="#5aa6e0" stroke-width="1.800" fill="none"/><path d="M11 4h7" stroke="#dfe3e8" stroke-width="1.400"/></symbol>
<symbol id="b-bl" viewBox="0 0 20 20"><path d="M2 18v-4M18 2v6" stroke="#dfe3e8" stroke-width="1.400"/><path d="M2 14c3-9 6 2 9 1s6-2 7-7" stroke="#5aa6e0" stroke-width="1.600" fill="none"/></symbol>
<symbol id="b-ep" viewBox="0 0 20 20"><path d="M2 8l4-4h12v10l-4 4H2z" fill="none" stroke="#5aa6e0" stroke-width="1.500"/><path d="M2 8h12v10M14 8l4-4M7 8v10" stroke="#dfe3e8" stroke-width="1.200" fill="none"/></symbol>
<symbol id="c-gr" viewBox="0 0 20 20"><path d="M6 2v16M10 2v16M14 2v16M2 6h16M2 10h16M2 14h16" stroke="#fff" stroke-width="1.200"/></symbol>
<symbol id="c-sn" viewBox="0 0 20 20"><path d="M4 4h2v2H4zM9 4h2v2H9zM14 4h2v2h-2zM4 9h2v2H4zM9 9h2v2H9zM14 9h2v2h-2zM4 14h2v2H4zM9 14h2v2H9zM14 14h2v2h-2z" fill="#dfe3e8"/></symbol>
<symbol id="c-in" viewBox="0 0 20 20"><path d="M9 2h7v8h-7z" fill="none" stroke="#dfe3e8" stroke-width="1.300"/><path d="M3 11h7v7H3z" fill="#dfe3e8"/></symbol>
<symbol id="c-dy" viewBox="0 0 20 20"><path d="M5 3v5M2 5.500h6" stroke="#fff" stroke-width="1.500"/><path d="M6 11h11v6H6z" fill="#fff"/></symbol>
<symbol id="c-or" viewBox="0 0 20 20"><path d="M4 2v14h14" stroke="#fff" stroke-width="1.600" fill="none"/><path d="M4 12h4v4" stroke="#fff" fill="none"/></symbol>
<symbol id="c-po" viewBox="0 0 20 20"><circle cx="9" cy="11" r="7" stroke="#dfe3e8" stroke-width="1.300" fill="none"/><path d="M9 11h10M9 11l7-7" stroke="#dfe3e8" stroke-width="1.300"/></symbol>
<symbol id="c-ix" viewBox="0 0 20 20"><path d="M5 2l10 16M15 2L5 18" stroke="#dfe3e8" stroke-width="1.300"/><path d="M8 11l4 4" stroke="#e24b3e" stroke-width="1.600"/></symbol>
<symbol id="c-an" viewBox="0 0 20 20"><path d="M3 16h15M3 16l10-11" stroke="#dfe3e8" stroke-width="1.300"/><circle cx="8" cy="13" r="1" fill="#dfe3e8"/></symbol>
<symbol id="c-os" viewBox="0 0 20 20"><path d="M3 3h14v15H3z" stroke="#fff" stroke-width="1.300" fill="none"/><path d="M2 2h5v5H2z" fill="#5b8fc4" stroke="#fff"/></symbol>
<symbol id="c-lw" viewBox="0 0 20 20"><path d="M2 4h16v2H2zM2 9h8v2H2zM2 14h11v2H2z" fill="#dfe3e8"/><path d="M12 9h6v2h-6zM15 14h3v2h-3z" fill="#dfe3e8"/></symbol>
<symbol id="c-tr" viewBox="0 0 20 20"><path d="M3 2h14v16H3z" fill="#fff"/><path d="M4 3h3v3H4zM10 3h3v3h-3zM7 6h3v3H7zM13 6h3v3h-3zM4 9h3v3H4zM10 9h3v3h-3zM7 12h3v3H7zM13 12h3v3h-3z" fill="#2d5f98"/></symbol>
<symbol id="c-se" viewBox="0 0 20 20"><path d="M8 8h10v11H8z" fill="#58b968"/><path d="M3 1v6M0 4h6" stroke="#dfe3e8" stroke-width="1.200"/></symbol>
<symbol id="c-cu" viewBox="0 0 20 20"><path d="M7 3h10v10H7zM7 3l-3 3v6l3-3M17 13l-3 3H7" stroke="#dfe3e8" stroke-width="1.200" fill="none"/><path d="M2 13h5v5H2z" fill="none" stroke="#e88f3a" stroke-width="1.300"/></symbol>
<symbol id="c-xy" viewBox="0 0 20 20"><path d="M5 17V5M2 8l3-4 3 4M5 17h11" stroke="#dfe3e8" stroke-width="1.300" fill="none"/><circle cx="13" cy="11" r="2" fill="#5aa6e0"/><path d="M12 4l3 3" stroke="#dfe3e8"/></symbol>
<symbol id="c-gz" viewBox="0 0 20 20"><path d="M5 5h11v11H5z" fill="none" stroke="#5aa6e0" stroke-width="1.300" stroke-dasharray="3 2"/><circle cx="5" cy="5" r="2" fill="#5aa6e0"/><circle cx="16" cy="16" r="2" fill="#5aa6e0"/><circle cx="5" cy="16" r="2" fill="#5aa6e0"/></symbol>
<symbol id="c-3d" viewBox="0 0 20 20"><path d="M10 2l7 5v8l-7 4-7-4V7zM3 13l7-5 7 5" stroke="#fff" stroke-width="1.300" fill="none"/></symbol>
<symbol id="c-a1" viewBox="0 0 20 20"><path d="M2 18l6-9 2 5 2-5 4 9M10 3v6" stroke="#fff" stroke-width="1.700" fill="none"/><circle cx="16" cy="5" r="2" fill="none" stroke="#fff"/></symbol>
<symbol id="c-a2" viewBox="0 0 20 20"><path d="M3 18l6-9 1 4 2-4 4 9M10 3v6" stroke="#dfe3e8" stroke-width="1.700" fill="none"/><path d="M15 4l2 2" stroke="#dfe3e8"/></symbol>
<symbol id="c-a3" viewBox="0 0 20 20"><path d="M3 18l6-9 1-6 1 6 6 9-7-5z" fill="#dfe3e8"/></symbol>
<symbol id="c-ge" viewBox="0 0 20 20"><circle cx="10" cy="10" r="5" fill="none" stroke="#dfe3e8" stroke-width="3"/><path d="M10 1v3M10 16v3M1 10h3M16 10h3M4 4l2 2M14 14l2 2M4 16l2-2M14 6l2-2" stroke="#dfe3e8" stroke-width="2.400"/></symbol>
<symbol id="c-pl" viewBox="0 0 20 20"><path d="M10 2v16M2 10h16" stroke="#fff" stroke-width="1.600"/></symbol>
<symbol id="c-ru" viewBox="0 0 20 20"><path d="M6 1h8v18H6z" fill="#dfe3e8"/><path d="M6 4h3M6 7h5M6 10h3M6 13h5M6 16h3" stroke="#3a4456"/></symbol>
<symbol id="c-pr" viewBox="0 0 20 20"><path d="M4 1h12v18H4z" fill="none" stroke="#dfe3e8" stroke-width="1.300"/><path d="M6 5h1v1H6zM6 9h1v1H6zM6 13h1v1H6zM9 5h5v1H9zM9 9h5v1H9zM9 13h5v1H9z" fill="#dfe3e8"/></symbol>
<symbol id="c-ws" viewBox="0 0 20 20"><path d="M2 2h12v11H2zM2 5h12" stroke="#dfe3e8" stroke-width="1.300" fill="none"/><path d="M10 12h8v7h-8z" fill="#c9ced6"/></symbol>
<symbol id="c-sh" viewBox="0 0 20 20"><path d="M2 3h6v6H2z" fill="none" stroke="#dfe3e8" stroke-width="1.200"/><circle cx="15" cy="6" r="3.500" fill="none" stroke="#dfe3e8" stroke-width="1.200"/><path d="M7 18l3-6 3 6z" fill="none" stroke="#dfe3e8" stroke-width="1.200"/></symbol>
<symbol id="c-is" viewBox="0 0 20 20"><circle cx="10" cy="10" r="8" fill="none" stroke="#fff" stroke-width="1.400"/><path d="M6 14l8-8" stroke="#fff" stroke-width="1.400"/></symbol>
<symbol id="c-pa" viewBox="0 0 20 20"><path d="M2 8h8v10H2z" fill="#e8b93a"/><path d="M3 2h8v7H3z" fill="#5aa6e0"/><path d="M7 1v9" stroke="#fff"/><path d="M10 13l3 4 5-7" stroke="#4ec24e" stroke-width="2.200" fill="none"/></symbol>
<symbol id="c-fs" viewBox="0 0 20 20"><path d="M2 3h16v14H2z" stroke="#dfe3e8" stroke-width="1.300" fill="none"/><path d="M6 13l8-6M11 6h4v4M5 10v4h4" stroke="#dfe3e8" fill="none"/></symbol>
<symbol id="c-mn" viewBox="0 0 20 20"><path d="M2 4h16M2 10h16M2 16h16" stroke="#fff" stroke-width="2"/></symbol>
<symbol id="q" viewBox="0 0 20 20"><circle cx="8" cy="8" r="6" fill="none" stroke="#c9ced6" stroke-width="1.500"/><path d="M12 12l6 6" stroke="#e8b93a" stroke-width="2"/></symbol>
<symbol id="user" viewBox="0 0 20 20"><circle cx="10" cy="6" r="4.500" fill="#5aa6e0"/><path d="M1 19c0-6 4-7 9-7s9 1 9 7z" fill="#5aa6e0"/></symbol>
<symbol id="cart" viewBox="0 0 20 20"><path d="M2 3h3l2 9h9l2-7H6" stroke="#c9ced6" stroke-width="1.600" fill="none"/><circle cx="8" cy="16" r="1.600" fill="#c9ced6"/><circle cx="15" cy="16" r="1.600" fill="#c9ced6"/></symbol>
<symbol id="aapp" viewBox="0 0 20 20"><path d="M3 16L10 3l7 13M6 12c3-2 6-2 8 0" stroke="#dfe3e8" stroke-width="2.200" fill="none"/><circle cx="3" cy="16" r="2" fill="#dfe3e8"/><circle cx="17" cy="16" r="2" fill="#dfe3e8"/></symbol>
<symbol id="share" viewBox="0 0 20 20"><path d="M19 1L1 9l5 2 9-6-7 8v5l3-3 4 2z" fill="#5aa6e0"/></symbol>
<symbol id="term" viewBox="0 0 20 20"><path d="M2 3h16v14H2z" fill="none" stroke="#222" stroke-width="1.300"/><path d="M2 6h16" stroke="#222"/><path d="M4 9l2 2-2 2M7 14h4" stroke="#222" fill="none"/></symbol>
<symbol id="wr" viewBox="0 0 20 20"><path d="M3 18l8-9c-1-3 1-7 5-7l-2 3 2 2 3-2c0 4-4 6-7 5l-8 9z" fill="#c9ced6"/></symbol>
</svg>

<div class="app">
<header class="titlebar">
  <span class="logo">A</span><span class="caret light"></span>
  <div class="qat">
    <svg class="i"><use href="#new"/></svg><svg class="i"><use href="#open"/></svg><svg class="i"><use href="#save"/></svg><svg class="i"><use href="#saveas"/></svg><svg class="i"><use href="#phone"/></svg><svg class="i"><use href="#phone2"/></svg><svg class="i"><use href="#print"/></svg><svg class="i"><use href="#undo"/></svg><span class="caret"></span><svg class="i"><use href="#redodim"/></svg><span class="caret"></span><span class="qmenu"></span><svg class="i share"><use href="#share"/></svg><span class="sharetxt">共享</span>
  </div>
  <div class="doc">Autodesk AutoCAD 2022<span class="docname">18米跨带吊车厂房图纸.dwg</span></div>
  <div class="infocenter">
    <span class="tri-r"></span>
    <div class="search">键入关键字或短语</div>
    <svg class="i ic-q"><use href="#q"/></svg><svg class="i ic-u"><use href="#user"/></svg><span class="uid">1505999135...</span><span class="caret"></span>
    <svg class="i ic-c"><use href="#cart"/></svg><svg class="i ic-a"><use href="#aapp"/></svg><span class="caret"></span><span class="divider"></span><svg class="i ic-h"><use href="#help"/></svg><span class="caret"></span>
    <div class="winbtns"><span class="min"></span><span class="max"></span><span class="cls">✕</span></div>
  </div>
</header>
<nav class="menubar">
  <span>文件(F)</span><span>编辑(E)</span><span>视图(V)</span><span>插入(I)</span><span>格式(O)</span><span>工具(T)</span><span>绘图(D)</span><span>标注(N)</span><span>修改(M)</span><span>参数(P)</span><span>窗口(W)</span><span>帮助(H)</span><span>Express</span>
  <div class="docbtns"><span class="min"></span><span class="rest"></span><span class="cls">✕</span></div>
</nav>
<div class="tabbar">
  <div class="tab">开始</div>
  <div class="tab active">18米跨带吊车厂房图纸*<span class="tabx">✕</span></div>
  <div class="tabadd">+</div>
</div>
<div class="tools">
  <div class="row row1">
    <div class="panel p1a">
      <span class="grip"></span>
      <svg class="i"><use href="#new"/></svg><svg class="i"><use href="#open"/></svg><svg class="i"><use href="#save"/></svg><span class="sep"></span>
      <svg class="i"><use href="#print"/></svg><svg class="i"><use href="#preview"/></svg><svg class="i"><use href="#publish"/></svg><svg class="i"><use href="#globe"/></svg><span class="sep"></span>
      <svg class="i"><use href="#cut"/></svg><svg class="i"><use href="#copy"/></svg><svg class="i"><use href="#paste"/></svg><svg class="i"><use href="#match"/></svg><svg class="i"><use href="#brush"/></svg><span class="sep"></span>
      <svg class="i"><use href="#undo"/></svg><span class="caret"></span><svg class="i"><use href="#redo"/></svg><span class="caret"></span><span class="sep"></span>
      <svg class="i"><use href="#hand"/></svg><svg class="i"><use href="#zrt"/></svg><svg class="i"><use href="#zwin"/></svg><svg class="i"><use href="#zprev"/></svg><span class="sep"></span>
      <svg class="i"><use href="#props"/></svg><svg class="i"><use href="#dc"/></svg><svg class="i"><use href="#tpal"/></svg><svg class="i"><use href="#sheet"/></svg><svg class="i"><use href="#markup"/></svg><svg class="i"><use href="#calc"/></svg><span class="sep"></span>
      <svg class="i"><use href="#help"/></svg>
    </div>
    <div class="panel p1b">
      <span class="grip"></span><svg class="i"><use href="#layer"/></svg>
      <div class="combo c-layer"><svg class="i s"><use href="#bulb"/></svg><svg class="i s"><use href="#sun"/></svg><svg class="i s"><use href="#frz"/></svg><svg class="i s"><use href="#lock"/></svg><svg class="i s"><use href="#sq"/></svg><span>0</span><span class="chev"></span></div>
      <svg class="i"><use href="#lay1"/></svg><svg class="i"><use href="#lay2"/></svg><svg class="i"><use href="#lay3"/></svg>
    </div>
    <div class="props">
      <span class="grip"></span>
      <div class="combo c-color"><span class="swatch"></span><span>ByLayer</span><span class="chev"></span></div>
      <span class="bar"></span>
      <div class="combo c-lt"><span class="ln"></span><span>ByLayer</span><span class="chev"></span></div>
      <span class="bar"></span>
      <div class="combo c-lw"><span class="ln thick"></span><span>ByLayer</span><span class="chev"></span></div>
      <span class="bar"></span>
      <div class="combo c-plot"><span>ByColor</span><span class="chev"></span></div>
    </div>
  </div>
  <div class="row row2">
    <div class="panel p2a">
      <span class="grip"></span><svg class="i"><use href="#note"/></svg><svg class="i"><use href="#ncheck"/></svg><svg class="i"><use href="#npink"/></svg>
    </div>
    <div class="panel p2b">
      <span class="grip"></span>
      <svg class="i"><use href="#dlin"/></svg><svg class="i"><use href="#dali"/></svg><svg class="i"><use href="#darc"/></svg><svg class="i"><use href="#dord"/></svg><span class="sep"></span>
      <svg class="i"><use href="#drad"/></svg><svg class="i"><use href="#djog"/></svg><svg class="i"><use href="#ddia"/></svg><svg class="i"><use href="#dang"/></svg><span class="sep"></span>
      <svg class="i"><use href="#dqk"/></svg><svg class="i"><use href="#dbase"/></svg><svg class="i"><use href="#dcont"/></svg><svg class="i"><use href="#dspc"/></svg><svg class="i"><use href="#dbrk"/></svg><span class="sep"></span>
      <svg class="i"><use href="#tol"/></svg><svg class="i"><use href="#cen"/></svg><svg class="i"><use href="#insp"/></svg><svg class="i"><use href="#jogl"/></svg><span class="sep"></span>
      <svg class="i"><use href="#dedit"/></svg><svg class="i"><use href="#dtxt"/></svg><svg class="i"><use href="#dupd"/></svg><span class="sep"></span>
      <div class="combo c-dim"><span>TSSD_100_100</span><span class="chev"></span></div>
      <svg class="i"><use href="#ann"/></svg><span class="sep"></span>
      <div class="wide">
      <svg class="i"><use href="#s3a"/></svg><svg class="i"><use href="#s3b"/></svg><svg class="i"><use href="#s3c"/></svg><svg class="i"><use href="#s3d"/></svg><svg class="i"><use href="#s3e"/></svg><svg class="i"><use href="#s3c"/></svg><svg class="i"><use href="#s3f"/></svg><svg class="i"><use href="#s3g"/></svg><svg class="i"><use href="#s3h"/></svg><svg class="i"><use href="#s3i"/></svg><svg class="i"><use href="#s3j"/></svg>
      </div>
      <span class="sep"></span>
      <svg class="i"><use href="#s3k"/></svg><svg class="i"><use href="#s3l"/></svg><svg class="i"><use href="#s3m"/></svg><svg class="i"><use href="#s3n"/></svg><span class="sep"></span>
      <svg class="i"><use href="#s3o"/></svg><svg class="i"><use href="#s3p"/></svg><svg class="i"><use href="#s3q"/></svg><svg class="i"><use href="#s3r"/></svg><svg class="i"><use href="#s3s"/></svg>
    </div>
  </div>
</div>
<main class="work">
  <aside class="side side-l">
    <div class="vpanel">
      <span class="vgrip"></span>
      <svg class="v"><use href="#a-line"/></svg><svg class="v"><use href="#a-xl"/></svg><svg class="v"><use href="#a-pl"/></svg><svg class="v"><use href="#a-pg"/></svg><svg class="v"><use href="#a-rec"/></svg><svg class="v"><use href="#a-arc"/></svg><svg class="v"><use href="#a-cir"/></svg><svg class="v"><use href="#a-cl"/></svg><svg class="v"><use href="#a-sp"/></svg><svg class="v"><use href="#a-el"/></svg><svg class="v"><use href="#a-ea"/></svg><svg class="v"><use href="#a-ins"/></svg><svg class="v"><use href="#a-blk"/></svg><svg class="v"><use href="#a-pt"/></svg><svg class="v"><use href="#a-ha"/></svg><svg class="v"><use href="#a-gr"/></svg><svg class="v"><use href="#a-reg"/></svg><svg class="v"><use href="#a-tb"/></svg><span class="vtext">A</span><svg class="v"><use href="#a-mt"/></svg>
    </div>
  </aside>
  <section class="canvas">
    <svg class="draw" viewBox="32 127 1534 1173" xmlns="http://www.w3.org/2000/svg">
      <defs>
        <pattern id="grid" patternUnits="userSpaceOnUse" x="140" y="3" width="127.5" height="127.500">
          <rect width="127.5" height="127.5" fill="#000"/>
          <path d="M25.500 0v127.500M51 0v127.500M76.500 0v127.500M102 0v127.500M0 25.500h127.500M0 51h127.500M0 76.500h127.500M0 102h127.500" stroke="#191c23" stroke-width="1"/>
          <path d="M.5 0v127.500M0 .5h127.500" stroke="#2a2f3e" stroke-width="1"/>
        </pattern>
        <pattern id="hatch" patternUnits="userSpaceOnUse" width="11" height="11">
          <path d="M-1 12L12 -1" stroke="#d0d0d0" stroke-width="1"/>
        </pattern>
        <g id="ax">
          <path class="gl" d="M0 457V513M0 865V905"/>
          <circle class="bub" cx="0" cy="449" r="7"/>
          <circle class="bub" cx="0" cy="916" r="7"/>
          <rect class="col" x="-4" y="543" width="8.500" height="9"/>
          <rect class="col" x="-4" y="830.500" width="8.500" height="9"/>
        </g>
        <g id="wtop">
          <rect x="20" y="542" width="58" height="7" fill="#8c8c00"/>
          <path d="M20 543.500h58M20 545.500h58M20 547.500h58" stroke="#a8a800" stroke-width=".6"/>
          <path class="wl" d="M20 542v7M78 542v7"/>
        </g>
        <g id="wbot">
          <path d="M20 836.500h58M20 838.500h58M20 840.500h58" stroke="#d8d800" stroke-width="1.100"/>
        </g>
        <path id="door" d="M0 0H14Q15 10 2 12Q15 14 14 24H0" fill="none" stroke="#c8c800" stroke-width="1.200"/>
        <g id="tb">
          <rect x="1246" y="0" width="195" height="33" fill="#000" stroke="#e8e8e8" stroke-width="1.500"/>
          <path class="wl2" d="M1283 0v33M1369 0v33M1395 0v33M1246 17h123M1369 8.500h72M1369 17h72M1369 25.500h72"/>
        </g>
      </defs>
      <rect x="32" y="127" width="1534" height="1173" fill="url(#grid)"/>

      <!-- frames -->
      <path class="frame-o" d="M107 127V331H1457V127M107 410H1457V1094H107Z"/>
      <path class="frame-i" d="M147 127V314H1441V127M147 425H1441V1077H147Z"/>
      <path class="wl" d="M763 131h135" stroke-dasharray="6 1"/>

      <!-- top detail -->
      <rect x="237" y="124" width="38" height="107" fill="url(#hatch)"/>
      <path class="wl" d="M237 127V231M275 127V190M219 231H280"/>
      <path d="M275 190V231" stroke="#d8d880" stroke-width="1.200"/>
      <rect x="238" y="155" width="23" height="46" fill="#000" stroke="#c8c8c8" stroke-width="2"/>
      <path d="M238 179H261" stroke="#c8c8c8" stroke-width="2"/>
      <path d="M261 177H336V178H378V151H386V187H261Z" fill="#000" stroke="#d8d8d8" stroke-width="1.600"/>
      <path d="M336 178V171H377" fill="none" stroke="#c8c8c8" stroke-width="1"/>
      <path class="gl" d="M224 154V202M217 154H238M217 202H238M380 178H408M404 151H420M388 187H420M416 151V187M378 127V151M249 232V268M275 235V253M385 235V268M247 251H387M247 266H387"/>
      <path d="M283 176V188M406 175V188" stroke="#f0f000"/>
      <path class="wl" d="M245 222L249 238L252 222L254 235"/>
      <path class="mg" d="M222 141H236L252 156M196 163H237M207 190H238M212 217H236L247 200M301 170H316L298 187M316 170H330L312 186M336 171V170H378"/>
      <path class="gl" d="M170 194H194M421 145H456M421 193H456M421 145l6 6 6-6M421 193l6-6 6 6M185 194l6 7 6-7"/>
      <path class="wl" d="M179 201.500H240"/>
      <g fill="#f00">
        <circle cx="242" cy="159" r="2"/><circle cx="248" cy="159" r="2"/><circle cx="257" cy="160" r="2"/><circle cx="242" cy="182" r="2"/><circle cx="257" cy="182" r="2"/><circle cx="242" cy="198" r="2"/><circle cx="249" cy="198" r="2"/><circle cx="257" cy="198" r="2"/><circle cx="271" cy="181" r="2"/><circle cx="288" cy="182" r="2"/><circle cx="304" cy="182" r="2"/><circle cx="319" cy="182" r="2"/><circle cx="333" cy="183" r="2"/><circle cx="354" cy="183" r="2"/><circle cx="380" cy="156" r="2"/><circle cx="380" cy="169" r="2"/><circle cx="380" cy="183" r="2"/>
      </g>
      <text class="t m" x="219" y="141" font-size="8">3Φ16</text>
      <text class="t m" x="197" y="163" font-size="8">Φ8@100</text>
      <text class="t m" x="296" y="171" font-size="8">Φ8@100</text>
      <text class="t m" x="350" y="169" font-size="8">Φ12@150</text>
      <text class="t m" x="205" y="198" font-size="8">2Φ16</text>
      <text class="t m" x="219" y="216" font-size="8">3Φ20</text>
      <text class="t g" x="433" y="144" font-size="10">5.700</text>
      <text class="t g" x="437" y="205" font-size="10">5.300</text>
      <text class="t g" x="171" y="193" font-size="10">5.000</text>
      <text class="t w" font-size="9" transform="translate(411 174) rotate(-90)">400</text>
      <text class="t w" font-size="9" transform="translate(222 185) rotate(-90)">600</text>
      <text class="t w" font-size="8" x="397" y="186">B1</text>
      <text class="t g" x="257" y="249" font-size="9">250</text>
      <text class="t g" x="308" y="249" font-size="9">1300</text>
      <text class="t g" x="302" y="264" font-size="9">1550</text>
      <text class="t w2" x="190" y="259" font-size="11" textLength="46" lengthAdjust="spacingAndGlyphs">雨蓬大样图</text>
      <circle cx="249" cy="278" r="8.500" fill="none" stroke="#e0e0e0" stroke-width="1.300"/>
      <text class="t c" x="296" y="284" font-size="10">1-1</text>
      <rect x="275" y="286" width="61" height="3" fill="#00e800"/>
      <path class="gl" d="M275 291H336"/>
      <text class="t w2" x="266" y="305" font-size="12" textLength="87" lengthAdjust="spacingAndGlyphs">雨蓬梁= 门宽+800</text>

      <!-- title block top -->
      <use href="#tb" y="282"/>
      <text class="t bl" x="1252" y="294" font-size="8" textLength="26" lengthAdjust="spacingAndGlyphs">工程名称</text><text class="t bl" x="1307" y="294" font-size="8">厂</text><text class="t bl" x="1321" y="294" font-size="8">房</text>
      <text class="t bl" x="1252" y="311" font-size="8" textLength="26" lengthAdjust="spacingAndGlyphs">图纸内容</text><text class="t bl" x="1293" y="311" font-size="7" textLength="64" lengthAdjust="spacingAndGlyphs">春季屋及屋面布置图</text>
      <text class="t bl" x="1376" y="289" font-size="6">审 核</text><text class="t bl" x="1376" y="297" font-size="6">日 期</text><text class="t bl" x="1376" y="306" font-size="6">比 例</text><text class="t bl" x="1376" y="313" font-size="6">图 号</text>
      <text class="t y" x="1408" y="289" font-size="6">曾三国</text><text class="t y" x="1404" y="297" font-size="6">2006年7月</text><text class="t y" x="1407" y="306" font-size="6">1:100</text><text class="t y" x="1408" y="313" font-size="6">JG-2</text>

      <!-- viewcube -->
      <g class="cube">
        <circle cx="1484" cy="204" r="51" fill="none" stroke="#333" stroke-width="15"/>
        <rect x="1459" y="184" width="50" height="50" fill="#a0a0a0"/>
        <rect x="1468" y="193" width="32" height="32" fill="#8e8e8e"/>
        <text x="1484" y="218" class="cu">上</text>
        <text x="1484" y="163" class="cl">北</text><text x="1484" y="271" class="cl">南</text><text x="1429" y="216" class="cl">西</text><text x="1539" y="216" class="cl">东</text>
        <rect x="1461" y="294" width="46" height="16" rx="4" fill="#62636c"/>
        <text x="1465" y="306" class="wcs">WCS</text>
        <path d="M1495 300h7l-3.500 4z" fill="#8e8e96"/>
      </g>

      <!-- main building -->
      <path class="wl" d="M267 508V574M278 497V574M281 500V574M267 508H289V574"/>
      <path class="wl2" d="M248 528H1360V855H1146M462 856H248V528M248 528L261 541M1360 528L1347 541M1360 855L1347 842M248 856L261 842"/>
      <path class="wl2" d="M462 842V866H560V842M482 842L462 866M540 842L560 866M560 856H1048M1048 842V866H1146V842M1068 842L1048 866M1127 842L1146 866"/>
      <path d="M1068 851H1127" stroke="#d8d800" stroke-width="2"/>
      <path class="wl2" d="M261 542H1347V842H261ZM261 549H1347M261 836H1347M268 549V830M1342 549V830"/>
      <path d="M269 553H1339V573H289V812H1318V573H1339V830H269Z" fill="url(#hatch)"/>
      <path class="wl2" d="M269 553H1339V830H269ZM289 573H1318V812H289Z"/>
      <use href="#wtop" x="364.300"/><use href="#wtop" x="462.100"/><use href="#wtop" x="559.800"/><use href="#wtop" x="657.600"/><use href="#wtop" x="755.300"/><use href="#wtop" x="853"/><use href="#wtop" x="950.800"/><use href="#wtop" x="1048.500"/><use href="#wtop" x="1146.300"/><use href="#wtop" x="1244"/>
      <use href="#wbot" x="364.300"/><use href="#wbot" x="559.800"/><use href="#wbot" x="657.600"/><use href="#wbot" x="755.300"/><use href="#wbot" x="853"/><use href="#wbot" x="950.800"/><use href="#wbot" x="1146.300"/><use href="#wbot" x="1244"/>
      <path d="M335 836.500h20M335 838.500h20M335 840.500h20" stroke="#d8d800" stroke-width="1.100"/>
      <path d="M261 560h7v18h-7zM261 610h7v18h-7zM261 658h7v19h-7zM261 707h7v18h-7zM261 765h7v18h-7zM261 805h7v18h-7z" fill="#8c8c00"/>
      <path d="M1343 572h4v50h-4zM1343 670h4v50h-4zM1343 750h4v50h-4z" fill="#8c8c00"/>
      <use href="#ax" x="266.600"/><use href="#ax" x="364.300"/><use href="#ax" x="462.100"/><use href="#ax" x="559.800"/><use href="#ax" x="657.600"/><use href="#ax" x="755.300"/><use href="#ax" x="853"/><use href="#ax" x="950.800"/><use href="#ax" x="1048.500"/><use href="#ax" x="1146.300"/><use href="#ax" x="1244"/><use href="#ax" x="1341.700"/>
      <path class="gl" d="M261 457V513M261 865V905M1347 457V513M1347 865V905M260 472H1349M265 485H1343M265 890H1343M260 903H1349"/>
      <rect class="col" x="262" y="639" width="8" height="8"/><rect class="col" x="262" y="737" width="8" height="8"/><rect class="col" x="360" y="639" width="8" height="8"/><rect class="col" x="360" y="737" width="8" height="8"/>
      <rect class="col" x="1338" y="639" width="8" height="8"/><rect class="col" x="1338" y="737" width="8" height="8"/>

      <!-- rooms -->
      <path class="wl" d="M363.500 573V582M368 573V582M363.500 607V680M368 607V640M368 647V680M363.500 704V778M368 704V738M368 743V753M368 763V791H289M363.500 778V787H289M289 640H364M289 645H364M289 738H364M289 743H364M318 743V748M322 743V748M318 760V787M322 760V787M329 810H332"/>
      <use href="#door" x="363.500" y="582"/><use href="#door" x="363.500" y="680"/>
      <path d="M367 753Q373 757 373 759Q370 762 366 763" fill="none" stroke="#c8c800" stroke-width="1.200"/>
      <rect x="363.500" y="763" width="4.500" height="15" fill="#b8b800"/>
      <path d="M330 793Q318 800 317 803Q320 808 331 809" fill="none" stroke="#c8c800" stroke-width="1.200"/>
      <text class="t c it" x="303" y="589" font-size="10">库</text><text class="t c it" x="318" y="589" font-size="10">房</text>
      <text class="t c it" x="303" y="687" font-size="10">库</text><text class="t c it" x="318" y="687" font-size="10">房</text>
      <text class="t c it" x="290" y="773" font-size="9" textLength="21" lengthAdjust="spacingAndGlyphs">休息室</text>
      <text class="t c it" x="333" y="773" font-size="9" textLength="21" lengthAdjust="spacingAndGlyphs">值班室</text>
      <text class="t c it" x="291" y="809" font-size="9" textLength="21" lengthAdjust="spacingAndGlyphs">杂物间</text>
      <text class="t m" x="270" y="572" font-size="7.500">Q0L12</text>
      <text class="t m" font-size="7.500" transform="translate(365 578) rotate(-90)">Q1L12-5</text>
      <text class="t m" x="263" y="642" font-size="7.500">QL1.12-5</text>
      <text class="t m" x="263" y="740" font-size="7.500">QL1.12-5</text>
      <text class="t m" x="266" y="790" font-size="7.500">QL1.12-6</text>
      <text class="t m" x="269" y="810" font-size="7.500">D0L12</text>

      <text class="t c zone" x="745" y="700">产</text><text class="t c zone" x="795" y="700">品</text><text class="t c zone" x="846" y="700">加</text><text class="t c zone" x="896" y="700">工</text><text class="t c zone" x="946" y="700">区</text>

      <!-- elevations -->
      <text class="t g" x="513" y="747" font-size="8">±0.000</text><path class="gl" d="M504 749H543M505 749l5 6 5-6zM505 755H514"/>
      <text class="t g" x="607" y="864" font-size="7">-0.700</text><path class="gl" d="M600 868H640M602 868l5 6 5-6z"/>
      <text class="t g" x="996" y="865" font-size="7">-0.300</text><path class="gl" d="M988 868H1025M988 868l5 6 5-6zM986 854H999"/>
      <text class="t w" font-size="7" transform="translate(595 570) rotate(-90)">1800</text>
      <text class="t w" font-size="7" transform="translate(580 829) rotate(-90)">1800</text>
      <text class="t w" font-size="7" transform="translate(843 854) rotate(-90)">3000</text>

      <!-- axis labels -->
      <g class="bt">
        <text x="266.600" y="453">1</text><text x="364.300" y="453">2</text><text x="462.100" y="453">3</text><text x="559.800" y="453">4</text><text x="657.600" y="453">5</text><text x="755.300" y="453">6</text><text x="853" y="453">7</text><text x="950.800" y="453">8</text><text x="1048.500" y="453">9</text><text x="1146.300" y="453">10</text><text x="1244" y="453">11</text><text x="1341.700" y="453">12</text>
        <text x="266.600" y="920">1</text><text x="364.300" y="920">2</text><text x="462.100" y="920">3</text><text x="559.800" y="920">4</text><text x="657.600" y="920">5</text><text x="755.300" y="920">6</text><text x="853" y="920">7</text><text x="950.800" y="920">8</text><text x="1048.500" y="920">9</text><text x="1146.300" y="920">10</text><text x="1244" y="920">11</text><text x="1341.700" y="920">12</text>
        <text x="178" y="549">D</text><text x="178" y="647">C</text><text x="178" y="745">B</text><text x="178" y="842">A</text>
        <text x="1419" y="549">D</text><text x="1419" y="647">C</text><text x="1419" y="745">B</text><text x="1419" y="842">A</text>
      </g>
      <circle class="bub" cx="178" cy="545" r="7"/><circle class="bub" cx="178" cy="643" r="7"/><circle class="bub" cx="178" cy="741" r="7"/><circle class="bub" cx="178" cy="838" r="7"/>
      <circle class="bub" cx="1419" cy="545" r="7"/><circle class="bub" cx="1419" cy="643" r="7"/><circle class="bub" cx="1419" cy="741" r="7"/><circle class="bub" cx="1419" cy="838" r="7"/>
      <path class="gl" d="M186 541.500H250M186 545.500H250M186 642.500H250M186 740.500H250M210 790H250M186 838.500H250M186 842H250M201 540V843M214 545V838M1358 541.500H1411M1358 545.500H1411M1358 643H1411M1358 741H1411M1358 838.500H1411M1358 842H1411M1393 545V838M1406 541V842"/>
      <g class="dim">
        <text x="315.500" y="482">6000</text><text x="413.200" y="482">6000</text><text x="511" y="482">6000</text><text x="608.700" y="482">6000</text><text x="706.500" y="482">6000</text><text x="804.200" y="482">6000</text><text x="901.900" y="482">6000</text><text x="999.700" y="482">6000</text><text x="1097.400" y="482">6000</text><text x="1195.200" y="482">6000</text><text x="1292.900" y="482">6000</text>
        <text x="315.500" y="888">6000</text><text x="413.200" y="888">6000</text><text x="511" y="888">6000</text><text x="608.700" y="888">6000</text><text x="706.500" y="888">6000</text><text x="804.200" y="888">6000</text><text x="901.900" y="888">6000</text><text x="999.700" y="888">6000</text><text x="1097.400" y="888">6000</text><text x="1195.200" y="888">6000</text><text x="1292.900" y="888">6000</text>
        <text x="804" y="470">66640</text><text x="804" y="901">66640</text>
        <text transform="translate(212 594) rotate(-90)">6000</text><text transform="translate(212 692) rotate(-90)">6000</text><text transform="translate(212 765) rotate(-90)">3000</text><text transform="translate(212 814) rotate(-90)">3000</text><text transform="translate(199 692) rotate(-90)">18480</text>
        <text transform="translate(1391 592) rotate(-90)">6000</text><text transform="translate(1391 691) rotate(-90)">6000</text><text transform="translate(1391 789) rotate(-90)">6000</text><text transform="translate(1404 691) rotate(-90)">18480</text>
      </g>

      <!-- note bubble -->
      <circle cx="169" cy="498" r="15" fill="none" stroke="#00d000" stroke-width="1.500"/>
      <path class="gl" d="M154 498H277"/>
      <text class="t g ctr" x="169" y="496" font-size="13" >8</text>
      <text class="t g ctr" x="169" y="511" font-size="13">13</text>
      <text class="t g" x="192" y="496" font-size="10" textLength="48" lengthAdjust="spacingAndGlyphs">苏2004G304</text>
      <text class="t g" x="185" y="509" font-size="9.500" textLength="82" lengthAdjust="spacingAndGlyphs">地沟入口中心线标高-1.8m</text>
      <text class="t g" x="188" y="520" font-size="10" textLength="64" lengthAdjust="spacingAndGlyphs">BxH1=1000x600</text>

      <!-- plan title -->
      <text class="t c b" x="721" y="943" font-size="13" textLength="79" lengthAdjust="spacingAndGlyphs">地沟平面布置图</text>
      <path d="M721 945H800" stroke="#e8e8e8" stroke-width="1.400"/><path d="M721 948.500H800" stroke="#e8e8e8"/>
      <text class="t w1" x="801" y="951" font-size="11" textLength="29">1:100</text>

      <!-- notes -->
      <g class="note">
        <text x="990" y="961" textLength="15" lengthAdjust="spacingAndGlyphs">说明</text>
        <text x="990" y="975" textLength="224" lengthAdjust="spacingAndGlyphs">1,地沟盖板及盖板过梁选自苏2004G304,地沟墙下过梁选自苏2004G307</text>
        <text x="990" y="990" textLength="130" lengthAdjust="spacingAndGlyphs">2,室内地沟剖面见苏2004G304第5页节点</text>
        <text x="1145" y="990" textLength="49" lengthAdjust="spacingAndGlyphs">,其中B=1200,</text>
        <text x="1002" y="1001" textLength="188" lengthAdjust="spacingAndGlyphs">H=1200,D=240,地沟入口处B=1200,H=1800,D=370</text>
        <text x="990" y="1014" textLength="169" lengthAdjust="spacingAndGlyphs">3,地沟墙体采用MU10实心砖,M5水泥砂浆砌筑并复砌板</text>
        <text x="990" y="1030" textLength="163" lengthAdjust="spacingAndGlyphs">4,地沟盖板不足一块时改为现浇,其横板配筋同相邻盖板。</text>
      </g>
      <circle cx="1131" cy="985" r="5" fill="none" stroke="#e0e0e0"/><text class="t w ctr" x="1131" y="988" font-size="8">2</text>

      <!-- title block bottom -->
      <use href="#tb" y="1044"/>
      <text class="t bl" x="1252" y="1056" font-size="8" textLength="26" lengthAdjust="spacingAndGlyphs">工程名称</text><text class="t bl" x="1307" y="1056" font-size="8">厂</text><text class="t bl" x="1321" y="1056" font-size="8">房</text>
      <text class="t bl" x="1252" y="1073" font-size="8" textLength="26" lengthAdjust="spacingAndGlyphs">图纸内容</text><text class="t bl" x="1300" y="1073" font-size="7" textLength="40" lengthAdjust="spacingAndGlyphs">地沟平面布置图</text>
      <text class="t bl" x="1376" y="1051" font-size="6">审 核</text><text class="t bl" x="1376" y="1059" font-size="6">日 期</text><text class="t bl" x="1376" y="1068" font-size="6">比 例</text><text class="t bl" x="1376" y="1075" font-size="6">图 号</text>
      <text class="t y" x="1408" y="1051" font-size="6">曾三国</text><text class="t y" x="1404" y="1059" font-size="6">2006年7月</text><text class="t y" x="1407" y="1068" font-size="6">1:100</text><text class="t y" x="1408" y="1075" font-size="6">JG-2</text>

      <!-- UCS -->
      <path class="ucs" d="M60 1224V1272H109M55.500 1268.500h9.500v9h-9.500z"/>
      <text class="ucst" x="61" y="1220">Y</text><text class="ucst" x="113" y="1272">X</text>
    </svg>
    <div class="msgs">
      <div>命令: _textedit</div>
      <div>当前设置: 编辑模式 = Multiple</div>
      <div>选择注释对象或  [放弃(U)/模式(M)]: *取消*</div>
    </div>
    <div class="cmd">
      <div class="cmd-h"><span class="vdots"></span><span class="cmdx">✕</span><svg class="i wr"><use href="#wr"/></svg></div>
      <div class="cmd-in"><svg class="i term"><use href="#term"/></svg><span class="caret dark"></span><span class="ph">键入命令</span><span class="up"></span></div>
    </div>
  </section>
  <aside class="side side-r">
    <div class="vpanel">
      <span class="vgrip"></span>
      <svg class="v"><use href="#b-er"/></svg><svg class="v"><use href="#b-cp"/></svg><svg class="v"><use href="#b-mi"/></svg><svg class="v"><use href="#b-of"/></svg><svg class="v"><use href="#b-ar"/></svg><svg class="v"><use href="#b-mv"/></svg><svg class="v"><use href="#b-ro"/></svg><svg class="v"><use href="#b-sc"/></svg><svg class="v"><use href="#b-st"/></svg><svg class="v"><use href="#b-tr"/></svg><svg class="v"><use href="#b-ex"/></svg><svg class="v"><use href="#b-bk"/></svg><svg class="v"><use href="#b-bp"/></svg><svg class="v"><use href="#b-jn"/></svg><svg class="v"><use href="#b-ch"/></svg><svg class="v"><use href="#b-fi"/></svg><svg class="v"><use href="#b-bl"/></svg><svg class="v"><use href="#b-ep"/></svg>
    </div>
  </aside>
</main>
<footer class="status">
  <div class="ltabs"><span class="lt on">模型</span><span class="lt">布局1</span><span class="lt add">+</span></div>
  <div class="sgroup g1"><span class="coords">-143759, -788624, 0</span><span class="mdl">模型</span></div>
  <div class="sgroup g2">
    <svg class="i on"><use href="#c-gr"/></svg><span class="sp3"></span><svg class="i"><use href="#c-sn"/></svg><span class="caret"></span><span class="sp3"></span><span class="ssep"></span>
    <svg class="i"><use href="#c-in"/></svg><span class="sp3"></span><svg class="i on"><use href="#c-dy"/></svg><span class="sp3"></span><svg class="i on"><use href="#c-or"/></svg><svg class="i"><use href="#c-po"/></svg><span class="sp3"></span><span class="caret"></span><span class="sp5"></span><svg class="i"><use href="#c-ix"/></svg><span class="sp3"></span><span class="caret"></span><span class="sp2"></span>
    <svg class="i"><use href="#c-an"/></svg><span class="sp4"></span><svg class="i on"><use href="#c-os"/></svg><span class="sp2"></span><span class="caret"></span><span class="sp5"></span><svg class="i"><use href="#c-lw"/></svg><span class="sp3"></span><svg class="i on"><use href="#c-tr"/></svg><span class="sp4"></span><svg class="i"><use href="#c-se"/></svg><span class="sp2"></span><svg class="i"><use href="#c-cu"/></svg><span class="sp3"></span><span class="caret"></span>
  </div>
  <div class="sgroup g3"><svg class="i"><use href="#c-xy"/></svg><span class="sp4"></span><svg class="i"><use href="#c-gz"/></svg><span class="caret"></span><span class="sp5"></span><svg class="i on"><use href="#c-3d"/></svg><span class="sp2"></span><span class="caret"></span></div>
  <div class="sgroup g4"><svg class="i on"><use href="#c-a1"/></svg><span class="sp2"></span><svg class="i"><use href="#c-a2"/></svg><svg class="i"><use href="#c-a3"/></svg><span class="scale">1:1 / 100%</span><span class="caret"></span></div>
  <div class="sgroup g5"><svg class="i"><use href="#c-ge"/></svg><span class="caret"></span></div>
  <div class="sgroup g6"><svg class="i"><use href="#c-pl"/></svg></div>
  <div class="sgroup g7"><svg class="i"><use href="#c-ru"/></svg><span class="unit">小数</span><span class="caret"></span></div>
  <div class="sgroup g8"><svg class="i"><use href="#c-pr"/></svg></div>
  <div class="sgroup g9"><svg class="i"><use href="#c-ws"/></svg><span class="sp3"></span><span class="caret"></span><span class="sp4"></span><svg class="i"><use href="#c-sh"/></svg></div>
  <div class="sgroup g10"><svg class="i on"><use href="#c-is"/></svg><span class="sp3"></span><svg class="i"><use href="#c-pa"/></svg></div>
  <div class="sgroup g11"><svg class="i"><use href="#c-fs"/></svg><svg class="i"><use href="#c-mn"/></svg></div>
</footer>
<div class="bottomline"></div>
</div>

<svg class="wm" viewBox="0 0 1600 1333" xmlns="http://www.w3.org/2000/svg">
  <g class="wmt">
    <text transform="translate(20 382) rotate(-45)" textLength="388">知末网 www.znzmo.com</text>
    <text transform="translate(571 382) rotate(-45)" textLength="388">知末网 www.znzmo.com</text>
    <text transform="translate(1122 382) rotate(-45)" textLength="388">知末网 www.znzmo.com</text>
    <text transform="translate(-133 749) rotate(-45)" textLength="388">知末网 www.znzmo.com</text>
    <text transform="translate(418 749) rotate(-45)" textLength="388">知末网 www.znzmo.com</text>
    <text transform="translate(969 749) rotate(-45)" textLength="388">知末网 www.znzmo.com</text>
    <text transform="translate(1520 749) rotate(-45)" textLength="388">知末网 www.znzmo.com</text>
    <text transform="translate(271 1116) rotate(-45)" textLength="388">知末网 www.znzmo.com</text>
    <text transform="translate(822 1116) rotate(-45)" textLength="388">知末网 www.znzmo.com</text>
    <text transform="translate(1373 1116) rotate(-45)" textLength="388">知末网 www.znzmo.com</text>
  </g>
  <text class="wmbig" x="1406" y="1258">知末</text>
  <text class="wmid" x="1361" y="1305">ID: 1173415698</text>
</svg>
</body>
</html>
```
FILE: styles.css
```css
*{box-sizing:border-box}
html,body{margin:0;padding:0;height:1333px;width:1600px;overflow:hidden;background:#1f2632}
body{position:relative;font-family:"Noto Sans","Noto Sans CJK SC",sans-serif;font-size:12px;color:#c9ced6}
.sprite{display:none}
.app{display:flex;flex-direction:column;height:1333px;width:1600px;border-top:2px solid #0a8fd8}
.i{width:22px;height:22px;flex:none;display:block}
.i.s{width:18px;height:18px}
.caret{width:0;height:0;flex:none;border-left:3px solid transparent;border-right:3px solid transparent;border-top:4px solid #aab1bc;margin:0 3px}
.caret.light{border-top-color:#dfe3e8;margin:0 0 0 5px}
.caret.dark{border-top-color:#333}

.titlebar{height:26px;flex:none;background:#222936;display:flex;align-items:center;padding-left:9px}
.logo{font:bold 21px "Liberation Serif",serif;color:#c8252b;width:15px}
.qat{display:flex;align-items:center;margin-left:13px}
.qat .i{width:23.300px;height:18px}
.qmenu{width:7px;height:6px;margin:0 3px;border-top:1px solid #c9ced6;border-bottom:5px solid #c9ced6;clip-path:polygon(0 0,100% 0,50% 100%)}
.qat .share{margin-left:2px}
.sharetxt{color:#7fb5e2;font-size:12px;margin-left:2px}
.doc{position:absolute;left:563px;top:5px;color:#d6dae0;font-size:12px;line-height:18px}
.docname{margin-left:17px;letter-spacing:-.1px}
.infocenter{margin-left:auto;display:flex;align-items:center;height:26px}
.tri-r{width:0;height:0;border-top:4px solid transparent;border-bottom:4px solid transparent;border-left:4px solid #c9ced6;margin-right:6px}
.search{width:173px;height:19px;background:#3a4456;color:#8890a0;font-style:italic;font-size:11.500px;line-height:19px;padding-left:3px}
.ic-q{width:18px;height:18px;margin-left:3px}
.ic-u{width:18px;height:18px;margin-left:6px}
.uid{font-size:12px;color:#d6dae0;margin-left:5px;width:77px;white-space:nowrap}
.ic-c{width:18px;height:18px;margin-left:6px}
.ic-a{width:20px;height:20px;margin-left:3px}
.divider{width:1px;height:18px;background:#4a5468;margin:0 12px 0 4px}
.ic-h{width:18px;height:18px}
.winbtns{display:flex;align-items:center;margin-left:23px;gap:13px;padding-right:11px;color:#e8eaee}
.min{width:8px;height:2px;background:#d6dae0;margin-top:10px}
.max{width:12px;height:12px;border:1.500px solid #d6dae0;border-top-width:2px}
.cls{font-size:15px;line-height:16px;color:#e8eaee}

.menubar{height:18px;flex:none;background:#222936;display:flex;align-items:center;gap:23.500px;padding-left:17px;color:#b9bfc9;font-size:12px;border-bottom:0}
.docbtns{margin-left:auto;display:flex;align-items:center;gap:8px;padding-right:6px}
.rest{width:11px;height:11px;border:1.400px solid #d6dae0;box-shadow:2px -2px 0 -1px #d6dae0}

.tabbar{height:30px;flex:none;background:#1c222e;border-top:2px solid #363f50;display:flex;align-items:flex-start;padding-left:20px;padding-top:1px}
.tab{height:21px;width:124px;background:#2b3442;color:#9aa1ad;font-size:12px;line-height:23px;padding-left:15px;clip-path:polygon(8px 0,100% 0,100% 100%,0 100%)}
.tab.active{width:167px;margin-left:1px;background:#3a4456;color:#eceef1;padding-left:10px;padding-top:2px;font-size:11.600px;font-weight:500;clip-path:polygon(4px 0,calc(100% - 6px) 0,100% 100%,0 100%);display:flex;align-items:center}
.tabx{margin-left:7px;font-size:11px;color:#c3c8d0}
.tabadd{width:21px;height:21px;margin-left:4px;background:#2b3442;color:#c9ced6;text-align:center;font-size:15px;line-height:20px;border-radius:5px 5px 0 0}

.tools{height:51px;flex:none;background:#3a4456;padding:1px 0 0 0;display:flex;flex-direction:column;gap:3px}
.row{display:flex;align-items:stretch;height:22px;padding-left:5px}
.row2{height:23px;padding-left:5px}
.panel{display:flex;align-items:center;background:#3a4456;border:1px solid #2a3240;border-radius:1px}
.p1a{width:628px}
.p1a .i{width:22.500px;height:21px}
.p1a .sep{margin:0 2.200px}
.p1a .caret{margin:0 2.500px}
.p1b{width:391px;margin-left:1px}
.p1b>.i{width:22px;height:21px}
.grip{width:6px;height:16px;flex:none;background:repeating-linear-gradient(#8f98a5 0 1px,transparent 1px 3px);background-size:2px 100%;background-repeat:no-repeat;background-position:2px 0}
.sep{width:1px;height:20px;background:#8f98a5;flex:none;margin:0 2.700px}
.combo{background:#fff;color:#1c1c1c;display:flex;align-items:center;height:21px;position:relative;flex:none;font-size:12px}
.row2 .combo{height:20px}
.chev{position:absolute;right:5px;top:6px;width:6px;height:6px;border-right:1px solid #777;border-bottom:1px solid #777;transform:rotate(45deg)}
.c-layer{width:292px;margin:0 0 0 1px;padding-left:2px}
.c-layer span:first-of-type{margin-left:3px}
.props{display:flex;align-items:flex-start;margin-left:3px}
.props .grip{margin-top:3px}
.c-color{width:146px;padding-left:3px}
.swatch{width:14px;height:15px;background:#fff;border:1px solid #222;margin-right:3px}
.bar{width:2px;height:20px;background:#aab1bc;margin:0 1.500px;flex:none}
.c-lt{width:155px;padding-left:5px}
.c-lw{width:121px;padding-left:5px}
.ln{width:58px;height:2px;background:#555;margin-right:5px}
.c-lw .ln{width:34px;height:3px;margin-right:5px}
.c-plot{width:116px;padding-left:10px;color:#8f8f8f;margin-left:3px}
.p2a{width:75px}
.p2a .i{width:21px;height:20px}
.p2a .grip{width:9px}
.p2b{width:1098px;margin-left:2px}
.c-dim{width:117px;padding-left:19px;margin-left:1px}
.p2b .i{width:22.200px;height:20px}
.wide{display:flex;margin-left:3px;align-items:center}
.wide .i{width:22.900px}

.work{flex:1;display:flex;min-height:0}
.side{flex:none;background:#3a4456;padding-top:2px}
.side-l{width:32px;border-left:4px solid #232a37;padding-left:1px}
.side-r{width:34px;padding-left:4px;padding-right:4px;border-right:1px solid #1c222e}
.vpanel{display:flex;flex-direction:column;align-items:center;background:#333d4e;border:1px solid #2a3240;width:23px;padding:2px 0}
.side-r .vpanel{width:25px}
.vgrip{height:5px;width:14px;flex:none;margin:2px 0 1px;border-top:1px solid #8f98a5;border-bottom:1px solid #8f98a5}
.v{width:19px;height:21.300px;flex:none;display:block}
.vtext{height:21.300px;font:20px/21px "Noto Sans",sans-serif;color:#dfe3e8;flex:none}
.canvas{flex:1;position:relative;min-width:0;background:#000}
.draw{display:block;width:100%;height:100%}

.gl{stroke:#00e000;stroke-width:1.200;fill:none}
.wl{stroke:#cfcfcf;stroke-width:1;fill:none}
.wl2{stroke:#d8d8d8;stroke-width:1.200;fill:none}
.mg{stroke:#d040d0;stroke-width:1;fill:none}
.frame-o{stroke:#3f6d97;stroke-width:1.500;fill:none}
.frame-i{stroke:#5d8ab4;stroke-width:2.500;fill:none}
.bub{fill:none;stroke:#00c000;stroke-width:2}
.col{fill:#fff}
.t{font-family:"Noto Sans CJK SC","Noto Sans",sans-serif}
.m{fill:#ea44ea}
.g{fill:#00f000}
.w{fill:#dcdcdc}
.w1{fill:#e8e8e8;font-family:"Liberation Serif","Noto Sans CJK SC",serif}
.w2{fill:#d0d0d0;font-weight:500}
.c{fill:#00d8d8}
.y{fill:#f0f000;font-weight:500}
.bl{fill:#e8e8e8;font-weight:700}
.it{font-style:italic;font-weight:500}
.b{font-weight:700}
.zone{font-size:13px;font-weight:700;font-style:italic;text-anchor:middle}
.ctr{text-anchor:middle}
.bt text{font:bold 11px "Liberation Sans",sans-serif;fill:#e4e4e4;text-anchor:middle}
.dim text{font:8px "Liberation Sans",sans-serif;fill:#dcdcdc;text-anchor:middle}
.note text{font:500 10px "Noto Sans CJK SC",sans-serif;fill:#00f000}
.cu{font:28px "Noto Sans CJK SC",sans-serif;fill:#4f4f4f;text-anchor:middle}
.cl{font:18px "Noto Sans CJK SC",sans-serif;fill:#8a8a8a;text-anchor:middle}
.wcs{font:12px "Liberation Sans",sans-serif;fill:#8e8e96}
.ucs{stroke:#d8d8d8;stroke-width:1.200;fill:none}
.ucst{font:300 20px "Noto Sans",sans-serif;fill:#d0d0d0}

.msgs{position:absolute;left:296px;top:1093px;display:flex;flex-direction:column;align-items:flex-start;gap:4.500px}
.msgs div{height:15px;line-height:15px;background:#4a4a4a;color:#cfcfcf;font:12px/15px "Liberation Mono","Noto Sans CJK SC",monospace;padding:0 1px;border-radius:2px;white-space:pre}
.cmd{position:absolute;left:236px;bottom:0;width:1060px;height:24px;display:flex}
.cmd-h{width:54px;background:#2c3442;display:flex;align-items:center;padding-left:3px}
.vdots{width:4px;height:18px;background:repeating-linear-gradient(#9aa3ae 0 1px,transparent 1px 3px)}
.cmdx{font-size:11px;margin-left:6px;color:#c9ced6}
.wr{width:18px;height:18px;margin-left:7px}
.cmd-in{flex:1;background:#b3b3b3;border-top:1px solid #d4d4d4;display:flex;align-items:center;padding-left:3px}
.term{width:17px;height:17px}
.ph{color:#727272;font-style:italic;font-size:12.500px;margin-left:3px}
.up{margin-left:auto;margin-right:3px;width:0;height:0;border-left:4px solid transparent;border-right:4px solid transparent;border-bottom:4px solid #444}

.status{height:31px;flex:none;background:#232a37;border-top:1px solid #39445a;display:flex;align-items:flex-start;padding-top:2px;padding-left:429px;position:relative}
.ltabs{position:absolute;left:15px;top:0;display:flex;gap:3px}
.lt{height:17px;width:46px;line-height:17px;text-align:center;background:#2e3747;color:#a8afba;font-size:12px;clip-path:polygon(0 0,100% 0,94% 100%,8% 100%)}
.lt.on{background:#4a556a;color:#fff;font-weight:500}
.lt.add{width:20px;margin-left:6px;font-size:14px}
.sgroup{display:flex;align-items:center;height:23px;background:#39435a;flex:none;margin-right:2px}
.sgroup .i{width:21.500px;height:23px;padding:2px 1px}
.sgroup .i.on{background:#5b8fc4}
.sgroup .caret{margin:0 3px}
.sp2{width:2px;flex:none}.sp3{width:3px;flex:none}.sp4{width:4px;flex:none}.sp5{width:5px;flex:none}
.g1{width:170px;justify-content:flex-end}
.coords{font-size:12px;color:#d6dae0;margin-right:11px;letter-spacing:-.1px}
.mdl{color:#d6dae0;font-size:12px;width:26px}
.g2{width:389px}
.ssep{width:2px;height:23px;background:#2a3240;flex:none;margin:0 2px}
.g3{width:104px;padding-left:1.500px}
.g4{width:145px;padding-left:1px}
.scale{font-size:12px;color:#d6dae0;margin-left:5px;width:53px;letter-spacing:-.3px;white-space:nowrap}
.g5{width:38px}
.g6{width:23px}
.g7{width:94px}
.unit{margin-left:5px;width:54px;color:#d6dae0}
.g8{width:23px}
.g9{width:66px;padding-left:1px}
.g10{width:48px}
.g11{width:48px}
.bottomline{height:2px;flex:none;background:#0a8fd8}

.wm{position:absolute;left:0;top:0;width:1600px;height:1333px;pointer-events:none}
.wmt text{font:700 36px "Open Sans","Noto Sans CJK SC",sans-serif;fill:rgba(255,255,255,.14)}
.wmbig{font:500 61px "Noto Sans CJK SC",sans-serif;fill:#c4c4c4}
.wmid{font:600 31px "Open Sans","Noto Sans",sans-serif;fill:#f2f2f2}
```
